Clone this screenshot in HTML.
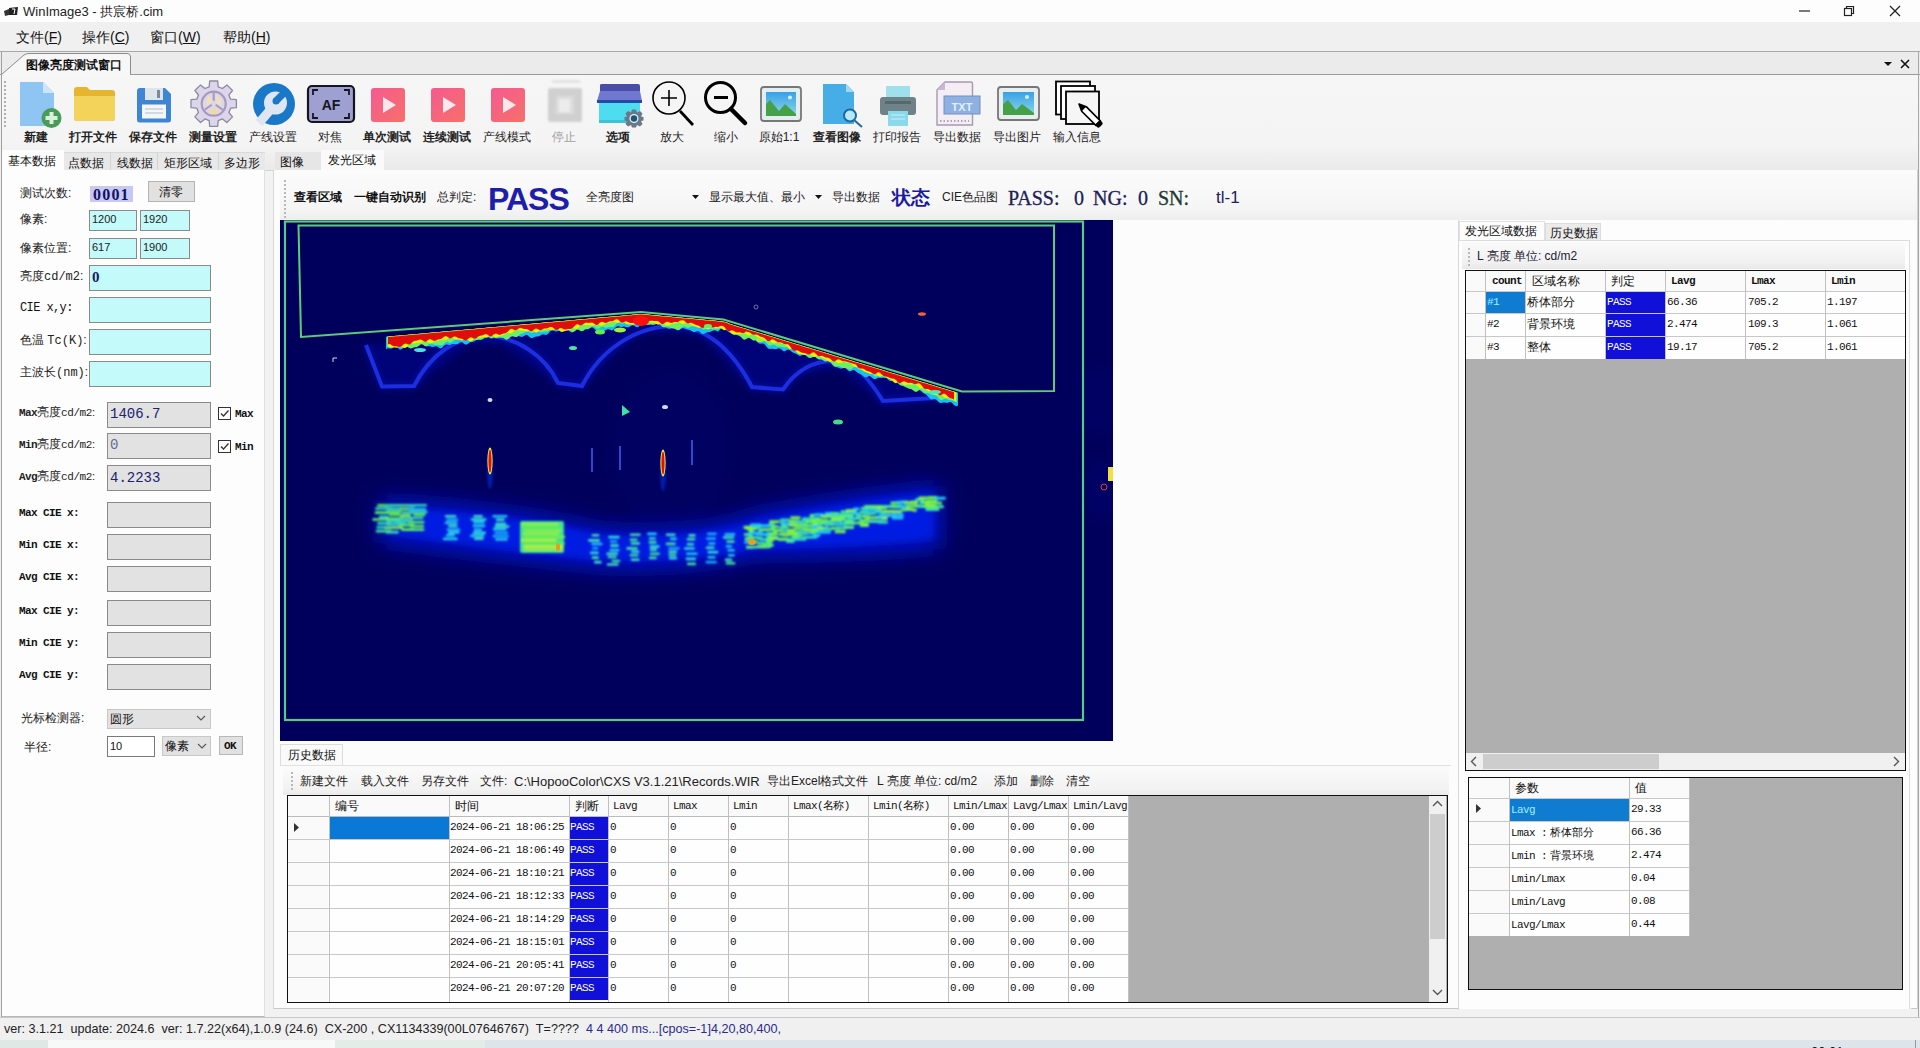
<!DOCTYPE html>
<html><head><meta charset="utf-8">
<style>
*{box-sizing:border-box;margin:0;padding:0}
html,body{width:1920px;height:1048px;overflow:hidden;background:#f0f0f0;font-family:"Liberation Sans",sans-serif;color:#000;position:relative}
.a{position:absolute}
.t{position:absolute;white-space:nowrap;line-height:1}
.mono{font-family:"Liberation Mono",monospace}
.lbl{position:absolute;white-space:nowrap;line-height:1;font-size:12px;transform:translateX(-50%);top:131px;color:#222}
.b{font-weight:bold}
.box{position:absolute;border:1px solid #8a8a8a}
.cy{background:#c4fafa}
.gr{background:#e2e2e2}
.ll{position:absolute;white-space:nowrap;line-height:1;font-size:12px;font-family:"Liberation Mono",monospace;color:#111;letter-spacing:-0.6px}
</style></head><body>
<!-- title bar -->
<div class="a" style="left:0;top:0;width:1920px;height:22px;background:#fdfdfd"></div>
<svg class="a" style="left:3px;top:6px" width="16" height="11" viewBox="0 0 16 11"><path d="M1 5 L6 3 L6 9 L2 10 Z" fill="#333"/><path d="M6 2 L15 1 L14 9 L6 9 Z" fill="#222"/><path d="M9 3 L12 3 L11 8" stroke="#fff" stroke-width="1" fill="none"/></svg>
<div class="t" style="left:23px;top:5px;font-size:13px;color:#222">WinImage3 - 拱宸桥.cim</div>
<svg class="a" style="left:1796px;top:4px" width="110" height="14" viewBox="0 0 110 14"><path d="M3 7 H14" stroke="#222" stroke-width="1.2"/><rect x="48.5" y="4.5" width="7" height="7" fill="none" stroke="#222" stroke-width="1.2"/><path d="M50.5 4.5 V2.5 H57.5 V9.5 H55.5" fill="none" stroke="#222" stroke-width="1.2"/><path d="M94 2 L104 12 M104 2 L94 12" stroke="#222" stroke-width="1.3"/></svg>
<!-- menu bar -->
<div class="a" style="left:0;top:22px;width:1920px;height:29px;background:#f0f0f0"></div>
<div class="t" style="left:16px;top:30px;font-size:14px;color:#111">文件(<u>F</u>)</div>
<div class="t" style="left:82px;top:30px;font-size:14px;color:#111">操作(<u>C</u>)</div>
<div class="t" style="left:150px;top:30px;font-size:14px;color:#111">窗口(<u>W</u>)</div>
<div class="t" style="left:223px;top:30px;font-size:14px;color:#111">帮助(<u>H</u>)</div>
<div class="a" style="left:0;top:51px;width:1920px;height:1px;background:#a8a8a8"></div>
<!-- doc tab strip -->
<div class="a" style="left:0;top:52px;width:1920px;height:22px;background:#ebebeb"></div>
<svg class="a" style="left:0;top:52px" width="140" height="24" viewBox="0 0 140 24"><path d="M1 23 L24 3 Q26 1.5 29 1.5 L127 1.5 Q130 1.5 130.5 4 L130.5 23" fill="#f7f7f7" stroke="#8c8c8c" stroke-width="1"/></svg>
<div class="t b" style="left:26px;top:59px;font-size:12px;color:#111">图像亮度测试窗口</div>
<div class="a" style="left:0;top:74px;width:1px;height:1px;background:#9a9a9a"></div>
<div class="a" style="left:130px;top:74px;width:1790px;height:1px;background:#9a9a9a"></div>
<svg class="a" style="left:1882px;top:58px" width="32" height="12" viewBox="0 0 32 12"><path d="M2 4 L10 4 L6 8 Z" fill="#111"/><path d="M19 2 L27 10 M27 2 L19 10" stroke="#111" stroke-width="1.6"/></svg>
<!-- toolbar -->
<div class="a" style="left:1px;top:75px;width:1917px;height:96px;background:linear-gradient(#f6f6f6,#f4f4f4 72%,#e9e9e9)"></div>
<div class="a" style="left:1px;top:52px;width:1px;height:966px;background:#a0a0a0"></div>
<div class="a" style="left:1918px;top:52px;width:1px;height:966px;background:#a8a8a8"></div>
<div class="a" style="left:4px;top:81px;width:2px;height:48px;background:repeating-linear-gradient(#b0b0b0 0 2px,transparent 2px 4px)"></div>
<!-- toolbar icons -->
<svg class="a" style="left:0;top:75px" width="1120" height="56" viewBox="0 75 1120 56">
 <!-- 新建 -->
 <path d="M20 82 H43 L54 93 V126 H20 Z" fill="#8ec5f2"/>
 <path d="M43 82 L54 93 H43 Z" fill="#c9e6fa"/>
 <circle cx="51.5" cy="118" r="10" fill="#4a9a5a"/>
 <path d="M51.5 112 V124 M45.5 118 H57.5" stroke="#d8f0dc" stroke-width="4"/>
 <!-- 打开文件 -->
 <path d="M74 90 Q74 87 77 87 H87 L90 90 H112 Q115 90 115 93 V118 Q115 121 112 121 H77 Q74 121 74 118 Z" fill="#e6b530"/>
 <path d="M74 96 H115 V118 Q115 121 112 121 H77 Q74 121 74 118 Z" fill="#f4d35a"/>
 <!-- 保存文件 -->
 <path d="M137 91 Q137 88 140 88 H165 L171 94 V120 Q171 122.5 168 122.5 H140 Q137 122.5 137 120 Z" fill="#3e86d4"/>
 <rect x="145" y="88" width="18" height="12" fill="#dce4ec"/>
 <rect x="157" y="90" width="3" height="8" fill="#7a8a98"/>
 <rect x="142" y="104.5" width="24" height="14" fill="#f4f6f8"/>
 <path d="M145 109 H163 M145 113 H163" stroke="#b0bcc8" stroke-width="1"/>
 <!-- 测量设置 gear -->
 <g transform="translate(213.7,103.7)">
  <path d="M-4.5 -16.9 L-4.0 -22.7 L4.0 -22.7 L4.5 -16.9 L8.8 -15.2 L13.2 -18.8 L18.8 -13.2 L15.2 -8.8 L16.9 -4.5 L22.7 -4.0 L22.7 4.0 L16.9 4.5 L15.2 8.8 L18.8 13.2 L13.2 18.8 L8.8 15.2 L4.5 16.9 L4.0 22.7 L-4.0 22.7 L-4.5 16.9 L-8.7 15.2 L-13.2 18.8 L-18.8 13.2 L-15.2 8.7 L-16.9 4.5 L-22.7 4.0 L-22.7 -4.0 L-16.9 -4.5 L-15.2 -8.7 L-18.8 -13.2 L-13.2 -18.8 L-8.8 -15.2 Z" fill="#dcd6ec" stroke="#8e8a9c" stroke-width="1.3" stroke-linejoin="round"/>
  <circle r="12" fill="none" stroke="#a898bc" stroke-width="2.2"/>
  <path d="M0 -3 L0 -11 M-2 1 L-9 6 M2 1 L9 6" stroke="#a898bc" stroke-width="2"/>
  <path d="M-3 -9 Q-9 -5 -7 2 L-2 -1 Z M3 -9 Q9 -5 7 2 L2 -1 Z" fill="#f0e0b8"/>
  <ellipse cx="0" cy="7.5" rx="4.5" ry="2.5" fill="#f0dc98"/>
 </g>
 <!-- 产线设置 -->
 <circle cx="274" cy="104" r="21" fill="#1a78c8"/>
 <path d="M259 123 L271 109" stroke="#dde6f2" stroke-width="9"/>
 <circle cx="275.5" cy="103" r="11.5" fill="#dde6f2"/>
 <path d="M276 101 L286 91" stroke="#1a78c8" stroke-width="7"/><circle cx="276" cy="101" r="3.5" fill="#1a78c8"/>
 <!-- AF -->
 <rect x="308" y="86" width="46" height="36" rx="4" fill="#9ea0d2" stroke="#15151f" stroke-width="2.2"/>
 <path d="M313 95 V90 H318 M349 95 V90 H344 M313 113 V118 H318 M349 113 V118 H344" stroke="#15151f" stroke-width="1.8" fill="none"/>
 <text x="331" y="110" font-family="Liberation Sans" font-weight="bold" font-size="14" text-anchor="middle" fill="#15151f">AF</text>
 <!-- play x3 -->
 <defs><linearGradient id="pk" x1="0" y1="0" x2="1" y2="1"><stop offset="0" stop-color="#f55a90"/><stop offset="1" stop-color="#f6706a"/></linearGradient></defs>
 <rect x="371" y="88" width="34" height="34" rx="3" fill="url(#pk)"/>
 <path d="M383 97 L396 105 L383 113 Z" fill="#fde8ec"/>
 <rect x="431" y="88" width="34" height="34" rx="3" fill="url(#pk)"/>
 <path d="M443 97 L456 105 L443 113 Z" fill="#fde8ec"/>
 <rect x="491" y="88" width="34" height="34" rx="3" fill="url(#pk)"/>
 <path d="M503 97 L516 105 L503 113 Z" fill="#fde8ec"/>
 <!-- stop (disabled) -->
 <defs><filter id="sb"><feGaussianBlur stdDeviation="0.9"/></filter></defs>
 <g filter="url(#sb)"><rect x="548" y="88" width="34" height="34" rx="2" fill="#d0d0d0"/><rect x="556" y="96" width="18" height="18" fill="#dcdcdc"/><rect x="559" y="99" width="11" height="13" fill="#ececec"/><rect x="552" y="80" width="28" height="3" fill="#e2e2e2"/></g>
 <!-- 选项 -->
 <path d="M600 85 Q600 84 602 84 H638 Q640 84 640 86 V91 H600 Z" fill="#4a4ea8"/>
 <path d="M600 91 H640 L642 101 H597 Z" fill="#7078d0"/>
 <rect x="597" y="100" width="45" height="3" fill="#2848a8"/>
 <rect x="599" y="103" width="41" height="20" fill="#4edcf0"/>
 <rect x="599" y="120" width="41" height="3" fill="#40c0d8"/>
 <g transform="translate(634,118.5)"><path d="M-2 -9 H2 L3 -6 L6 -7.5 L8.5 -5 L7 -2 L9.5 -1.5 V2 L7 2.5 L8.5 5.5 L6 8 L3 6.5 L2 9 H-2 L-3 6.5 L-6 8 L-8.5 5.5 L-7 2.5 L-9.5 2 V-1.5 L-7 -2 L-8.5 -5 L-6 -7.5 L-3 -6 Z" fill="#6a7888"/><circle r="4.5" fill="#e8f4f8"/><circle r="3.2" fill="#1a5878"/></g>
 <!-- 放大 -->
 <circle cx="669" cy="98" r="16" fill="none" stroke="#000" stroke-width="1.6"/>
 <path d="M661 98 H677 M669 90 V106" stroke="#000" stroke-width="1.6"/>
 <path d="M680 111 L693 125" stroke="#000" stroke-width="2.8"/>
 <!-- 缩小 -->
 <circle cx="720.5" cy="97.5" r="15" fill="none" stroke="#000" stroke-width="3"/>
 <path d="M714 97.5 H728" stroke="#000" stroke-width="3"/>
 <path d="M731 109 L745 123" stroke="#000" stroke-width="4.5" stroke-linecap="round"/>
 <!-- 原始1:1 -->
 <rect x="761" y="87" width="40" height="34" rx="3" fill="#e4eef0" stroke="#777" stroke-width="1.8"/>
 <defs><linearGradient id="sky" x1="0" y1="0" x2="0" y2="1"><stop offset="0" stop-color="#3aa0e6"/><stop offset="1" stop-color="#8ad8ea"/></linearGradient></defs>
 <rect x="766" y="92" width="30" height="24" fill="url(#sky)"/>
 <path d="M766 116 V104 L770 100 L779 111 L785 104 L796 114 V116 Z" fill="#46a048"/>
 <circle cx="790" cy="97.5" r="2" fill="#d0f0f8"/>
 <!-- 查看图像 -->
 <path d="M823 84 H846 L854 92 V124 H823 Z" fill="#46ade6"/>
 <path d="M846 84 L854 92 H846 Z" fill="#a0d8f4"/>
 <circle cx="850" cy="115.5" r="6" fill="#b8e8f8" stroke="#1a6aa0" stroke-width="2"/>
 <path d="M854 120 L862 127" stroke="#2a6e9a" stroke-width="2.2"/>
 <!-- 打印报告 -->
 <rect x="886" y="86" width="24" height="14" fill="#9ee0ec"/>
 <rect x="880" y="97" width="36" height="18" rx="3" fill="#6f8288"/>
 <rect x="885" y="101" width="26" height="3" fill="#55686e"/>
 <rect x="888" y="111" width="20" height="15" fill="#8ad8ea"/>
 <path d="M891 115 H905 M891 119 H905" stroke="#c8f0f8" stroke-width="1"/>
 <!-- 导出数据 TXT -->
 <path d="M937 90 L945 82 H971 Q972.5 82 972.5 84 V125 H937 Z" fill="#f4eef4" stroke="#a898b0" stroke-width="1.4"/>
 <path d="M937 90 H945 V82 Z" fill="#c8b8d4"/>
 <rect x="944" y="96" width="36" height="18" fill="#8fb0e0" stroke="#7090c0" stroke-width="1"/>
 <text x="962" y="110.5" font-family="Liberation Sans" font-weight="bold" font-size="11" text-anchor="middle" fill="#e0f0ff">TXT</text>
 <path d="M940 121 H969" stroke="#988aa4" stroke-width="1.3" stroke-dasharray="1.5 2"/>
 <!-- 导出图片 -->
 <rect x="998" y="87" width="41" height="33" rx="3" fill="#e8eef0" stroke="#777" stroke-width="1.8"/>
 <rect x="1003" y="92" width="31" height="23" fill="url(#sky)"/>
 <path d="M1003 115 V104 L1008 100 L1016 110 L1022 104 L1034 113 V115 Z" fill="#46a048"/>
 <circle cx="1027" cy="97" r="2" fill="#d0f0f8"/>
 <!-- 输入信息 -->
 <rect x="1056" y="81.5" width="34" height="33" fill="#fff" stroke="#000" stroke-width="1.8"/>
 <rect x="1061" y="86" width="34" height="33" fill="#fff" stroke="#000" stroke-width="1.8"/>
 <rect x="1066" y="91.5" width="33" height="32.5" fill="#f6f6f6" stroke="#000" stroke-width="1.8"/>
 <g transform="translate(1079,104) rotate(45)"><path d="M0 0 L7 -3.2 L27 -3.2 L27 3.2 L7 3.2 Z" fill="#fff" stroke="#000" stroke-width="1.6" stroke-linejoin="round"/><rect x="26" y="-3.6" width="5" height="7.2" rx="2" fill="#000"/><path d="M0 0 L7 -3.2 L7 3.2 Z" fill="#000"/></g>
</svg>
<!-- toolbar labels -->
<div class="lbl b" style="left:36px">新建</div>
<div class="lbl b" style="left:93px">打开文件</div>
<div class="lbl b" style="left:153px">保存文件</div>
<div class="lbl b" style="left:213px">测量设置</div>
<div class="lbl" style="left:273px">产线设置</div>
<div class="lbl" style="left:330px">对焦</div>
<div class="lbl b" style="left:387px">单次测试</div>
<div class="lbl b" style="left:447px">连续测试</div>
<div class="lbl" style="left:507px">产线模式</div>
<div class="lbl" style="left:564px;color:#a0a0a0">停止</div>
<div class="lbl b" style="left:618px">选项</div>
<div class="lbl" style="left:672px">放大</div>
<div class="lbl" style="left:726px">缩小</div>
<div class="lbl" style="left:779px">原始1:1</div>
<div class="lbl b" style="left:837px">查看图像</div>
<div class="lbl" style="left:897px">打印报告</div>
<div class="lbl" style="left:957px">导出数据</div>
<div class="lbl" style="left:1017px">导出图片</div>
<div class="lbl" style="left:1077px">输入信息</div>
<!-- ===== LEFT PANEL ===== -->
<div class="a" style="left:2px;top:171px;width:1916px;height:846px;background:#f2f2f2"></div>
<div class="a" style="left:2px;top:170px;width:1916px;height:1px;background:#d4d4d4"></div>
<div class="a" style="left:2px;top:170px;width:263px;height:847px;background:#fdfdfd;border-bottom:1px solid #b8b8b8;border-right:1px solid #e0e0e0"></div>
<div class="a" style="left:63px;top:152px;width:202px;height:18px;background:#e8e8e8;border-top:1px solid #dadada"></div>
<div class="a" style="left:2px;top:150px;width:62px;height:21px;background:#fdfdfd"></div>
<div class="t" style="left:8px;top:155px;font-size:12px;color:#111">基本数据</div>
<div class="t" style="left:68px;top:157px;font-size:12px;color:#111">点数据</div>
<div class="a" style="left:110px;top:152px;width:1px;height:18px;background:#d4d4d4"></div>
<div class="t" style="left:117px;top:157px;font-size:12px;color:#111">线数据</div>
<div class="a" style="left:157px;top:152px;width:1px;height:18px;background:#d4d4d4"></div>
<div class="t" style="left:164px;top:157px;font-size:12px;color:#111">矩形区域</div>
<div class="a" style="left:218px;top:152px;width:1px;height:18px;background:#d4d4d4"></div>
<div class="t" style="left:224px;top:157px;font-size:12px;color:#111">多边形</div>

<div class="t" style="left:20px;top:187px;font-size:12px;color:#222">测试次数:</div>
<div class="a" style="left:90px;top:186px;width:43px;height:16px;background:#c8c8f0"></div>
<div class="t b" style="left:93px;top:187px;font-size:16px;color:#10106a;font-family:'Liberation Serif';letter-spacing:1.2px">0001</div>
<div class="a" style="left:148px;top:181px;width:47px;height:21px;background:#e1e1e1;border:1px solid #b4b4b4"></div>
<div class="t" style="left:159px;top:186px;font-size:12px;color:#111">清零</div>

<div class="t" style="left:20px;top:213px;font-size:12px;color:#222">像素:</div>
<div class="box cy" style="left:89px;top:210px;width:48px;height:21px"></div>
<div class="box cy" style="left:140px;top:210px;width:50px;height:21px"></div>
<div class="t" style="left:92px;top:214px;font-size:11px;color:#222">1200</div>
<div class="t" style="left:143px;top:214px;font-size:11px;color:#222">1920</div>

<div class="t" style="left:20px;top:242px;font-size:12px;color:#222">像素位置:</div>
<div class="box cy" style="left:89px;top:238px;width:48px;height:21px"></div>
<div class="box cy" style="left:140px;top:238px;width:50px;height:21px"></div>
<div class="t" style="left:92px;top:242px;font-size:11px;color:#222">617</div>
<div class="t" style="left:143px;top:242px;font-size:11px;color:#222">1900</div>

<div class="t" style="left:20px;top:270px;font-size:12px;color:#222">亮度<span class="mono">cd/m2</span>:</div>
<div class="box cy" style="left:89px;top:265px;width:122px;height:26px"></div>
<div class="t b" style="left:92px;top:270px;font-size:15px;color:#1a1a60;font-family:'Liberation Serif'">0</div>

<div class="ll" style="left:20px;top:302px">CIE x,y:</div>
<div class="box cy" style="left:89px;top:297px;width:122px;height:26px"></div>
<div class="t" style="left:20px;top:334px;font-size:12px;color:#222">色温 <span class="mono">Tc(K)</span>:</div>
<div class="box cy" style="left:89px;top:329px;width:122px;height:26px"></div>
<div class="t" style="left:20px;top:366px;font-size:12px;color:#222">主波长<span class="mono">(nm)</span>:</div>
<div class="box cy" style="left:89px;top:361px;width:122px;height:26px"></div>

<div class="t" style="left:19px;top:406px;font-size:11px;color:#222"><span class="mono b" style="letter-spacing:-0.6px">Max</span><span style="font-size:12px">亮度</span><span class="mono" style="letter-spacing:-0.4px">cd/m2</span>:</div>
<div class="box gr" style="left:107px;top:402px;width:104px;height:26px"></div>
<div class="t mono" style="left:110px;top:407px;font-size:14px;color:#202070">1406.7</div>
<div class="a" style="left:218px;top:407px;width:13px;height:13px;border:1px solid #333;background:#fff"></div>
<svg class="a" style="left:219px;top:408px" width="11" height="11"><path d="M2 5.5 L4.5 8 L9.5 2.5" stroke="#333" stroke-width="1.3" fill="none"/></svg>
<div class="ll b" style="left:235px;top:409px;font-size:11px">Max</div>

<div class="t" style="left:19px;top:438px;font-size:11px;color:#222"><span class="mono b" style="letter-spacing:-0.6px">Min</span><span style="font-size:12px">亮度</span><span class="mono" style="letter-spacing:-0.4px">cd/m2</span>:</div>
<div class="box gr" style="left:107px;top:433px;width:104px;height:26px"></div>
<div class="t mono" style="left:110px;top:438px;font-size:14px;color:#6a6a90">0</div>
<div class="a" style="left:218px;top:440px;width:13px;height:13px;border:1px solid #333;background:#fff"></div>
<svg class="a" style="left:219px;top:441px" width="11" height="11"><path d="M2 5.5 L4.5 8 L9.5 2.5" stroke="#333" stroke-width="1.3" fill="none"/></svg>
<div class="ll b" style="left:235px;top:442px;font-size:11px">Min</div>

<div class="t" style="left:19px;top:470px;font-size:11px;color:#222"><span class="mono b" style="letter-spacing:-0.6px">Avg</span><span style="font-size:12px">亮度</span><span class="mono" style="letter-spacing:-0.4px">cd/m2</span>:</div>
<div class="box gr" style="left:107px;top:465px;width:104px;height:26px"></div>
<div class="t mono" style="left:110px;top:471px;font-size:14px;color:#202070">4.2233</div>

<div class="ll b" style="left:19px;top:508px;font-size:11px">Max CIE x:</div>
<div class="box gr" style="left:107px;top:502px;width:104px;height:26px"></div>
<div class="ll b" style="left:19px;top:540px;font-size:11px">Min CIE x:</div>
<div class="box gr" style="left:107px;top:534px;width:104px;height:26px"></div>
<div class="ll b" style="left:19px;top:572px;font-size:11px">Avg CIE x:</div>
<div class="box gr" style="left:107px;top:566px;width:104px;height:26px"></div>
<div class="ll b" style="left:19px;top:606px;font-size:11px">Max CIE y:</div>
<div class="box gr" style="left:107px;top:600px;width:104px;height:26px"></div>
<div class="ll b" style="left:19px;top:638px;font-size:11px">Min CIE y:</div>
<div class="box gr" style="left:107px;top:632px;width:104px;height:26px"></div>
<div class="ll b" style="left:19px;top:670px;font-size:11px">Avg CIE y:</div>
<div class="box gr" style="left:107px;top:664px;width:104px;height:26px"></div>

<div class="t" style="left:21px;top:712px;font-size:12px;color:#222">光标检测器:</div>
<div class="box" style="left:107px;top:709px;width:104px;height:20px;background:#e2e2e2;border-color:#c8c8c8"></div>
<div class="t" style="left:110px;top:713px;font-size:12px;color:#111">圆形</div>
<svg class="a" style="left:196px;top:715px" width="10" height="7"><path d="M1 1 L5 5 L9 1" stroke="#555" stroke-width="1.1" fill="none"/></svg>
<div class="t" style="left:24px;top:741px;font-size:12px;color:#222">半径:</div>
<div class="box" style="left:107px;top:736px;width:48px;height:21px;background:#fff;border-color:#7a7a7a"></div>
<div class="t" style="left:110px;top:741px;font-size:11px;color:#111">10</div>
<div class="box" style="left:162px;top:736px;width:49px;height:20px;background:#e2e2e2;border-color:#c8c8c8"></div>
<div class="t" style="left:165px;top:740px;font-size:12px;color:#111">像素</div>
<svg class="a" style="left:197px;top:743px" width="10" height="7"><path d="M1 1 L5 5 L9 1" stroke="#555" stroke-width="1.1" fill="none"/></svg>
<div class="box" style="left:219px;top:736px;width:24px;height:19px;background:#e1e1e1;border-color:#b8b8b8"></div>
<div class="ll b" style="left:224px;top:741px;font-size:11px">OK</div>
<!-- ===== CENTER PANEL ===== -->
<div class="a" style="left:275px;top:152px;width:46px;height:18px;background:#e6e6e6"></div>
<div class="a" style="left:321px;top:150px;width:63px;height:21px;background:#fafafa"></div>
<div class="t" style="left:280px;top:156px;font-size:12px;color:#111">图像</div>
<div class="t" style="left:328px;top:154px;font-size:12px;color:#111">发光区域</div>
<div class="a" style="left:273px;top:170px;width:1645px;height:839px;background:#fcfcfc;border-left:1px solid #d8d8d8;border-right:1px solid #d0d0d0;border-bottom:1px solid #c8c8c8"></div>
<!-- center toolbar -->
<div class="a" style="left:280px;top:171px;width:1637px;height:49px;background:linear-gradient(#fbfbfb,#f6f6f6 70%,#eeeeee)"></div>
<div class="a" style="left:284px;top:180px;width:2px;height:38px;background:repeating-linear-gradient(#b8b8b8 0 2px,transparent 2px 4px)"></div>
<div class="t b" style="left:294px;top:191px;font-size:12px;color:#111">查看区域</div>
<div class="t b" style="left:354px;top:191px;font-size:12px;color:#111">一键自动识别</div>
<div class="t" style="left:437px;top:191px;font-size:12px;color:#222">总判定:</div>
<div class="t b" style="left:488px;top:183px;font-size:32px;color:#1e1eaa;letter-spacing:-1px">PASS</div>
<div class="t" style="left:586px;top:191px;font-size:12px;color:#222">全亮度图</div>
<svg class="a" style="left:692px;top:195px" width="8" height="5"><path d="M0 0 H7 L3.5 4 Z" fill="#111"/></svg>
<div class="t" style="left:709px;top:191px;font-size:12px;color:#222">显示最大值、最小</div>
<svg class="a" style="left:815px;top:195px" width="8" height="5"><path d="M0 0 H7 L3.5 4 Z" fill="#111"/></svg>
<div class="t" style="left:832px;top:191px;font-size:12px;color:#222">导出数据</div>
<div class="t b" style="left:892px;top:188px;font-size:19px;color:#1a1aa0">状态</div>
<div class="t" style="left:942px;top:191px;font-size:12px;color:#222">CIE色品图</div>
<div class="t b" style="left:1008px;top:188px;font-size:20px;color:#20205a;font-family:'Liberation Serif';font-weight:normal;-webkit-text-stroke:0.3px #20205a">PASS:</div>
<div class="t b" style="left:1074px;top:188px;font-size:20px;color:#20205a;font-family:'Liberation Serif';font-weight:normal;-webkit-text-stroke:0.3px #20205a">0</div>
<div class="t b" style="left:1093px;top:188px;font-size:20px;color:#20205a;font-family:'Liberation Serif';font-weight:normal;-webkit-text-stroke:0.3px #20205a">NG:</div>
<div class="t b" style="left:1138px;top:188px;font-size:20px;color:#20205a;font-family:'Liberation Serif';font-weight:normal;-webkit-text-stroke:0.3px #20205a">0</div>
<div class="t b" style="left:1158px;top:188px;font-size:20px;color:#203a30;font-family:'Liberation Serif';font-weight:normal;-webkit-text-stroke:0.3px #203a30">SN:</div>
<div class="t" style="left:1216px;top:189px;font-size:17px;color:#20205a">tl-1</div>
<svg class="a" style="left:280px;top:220px" width="833" height="521" viewBox="280 220 833 521">
<defs>
<filter id="bl1" x="-30%" y="-80%" width="160%" height="260%"><feGaussianBlur stdDeviation="7"/></filter>
<filter id="bl2" x="-30%" y="-80%" width="160%" height="260%"><feGaussianBlur stdDeviation="3"/></filter>
<filter id="bl3" x="-10%" y="-50%" width="120%" height="200%"><feGaussianBlur stdDeviation="1.2"/></filter>
<filter id="bl4" x="-10%" y="-50%" width="120%" height="200%"><feGaussianBlur stdDeviation="0.6"/></filter>
<filter id="bl5" x="-10%" y="-50%" width="120%" height="200%"><feGaussianBlur stdDeviation="0.8"/></filter>
</defs>
<rect x="280" y="220" width="833" height="521" fill="#00005c"/>
<g filter="url(#bl1)" opacity="0.15"><ellipse cx="670" cy="450" rx="60" ry="80" fill="#000a80"/><rect x="1080" y="370" width="30" height="60" fill="#000a90"/><ellipse cx="1100" cy="490" rx="15" ry="30" fill="#0010a0"/><rect x="860" y="500" width="30" height="60" fill="#000880"/></g>
<path d="M366 345 L640 318 L724 325 L955 395 L951 400 L883 405 L840 370 L800 375 L783 392 L752 390 L700 335 L640 330 L582 388 L558 385 L500 345 L470 345 L414 388 L382 388 Z" fill="#0010b8" opacity="0.3" filter="url(#bl2)"/>
<path d="M366 345 L382 386.5 L414 386 C430 355 455 337 485 336 C515 336 545 355 558 383 L582 386 C600 350 635 327 672 326 C710 326 735 355 752 387 L783 389.5 C795 372 812 361 833 361 C855 361 870 380 883 401 L951 397" fill="none" stroke="#0818c0" stroke-width="8" opacity="0.35" filter="url(#bl2)"/>
<path d="M366 345 L382 386.5 L414 386 C430 355 455 337 485 336 C515 336 545 355 558 383 L582 386 C600 350 635 327 672 326 C710 326 735 355 752 387 L783 389.5 C795 372 812 361 833 361 C855 361 870 380 883 401 L951 397" fill="none" stroke="#1a2ee0" stroke-width="4" filter="url(#bl4)"/>
<path d="M386.0 336.7 L388.0 336.6 L390.0 336.4 L392.0 336.2 L394.0 336.0 L396.0 335.8 L398.0 335.7 L400.0 335.5 L402.0 335.3 L404.0 335.1 L406.0 334.9 L408.0 334.8 L410.0 334.6 L412.0 334.4 L414.0 334.2 L416.0 334.1 L418.0 333.9 L420.0 333.7 L422.0 333.5 L424.0 333.3 L426.0 333.2 L428.0 333.0 L430.0 332.8 L432.0 332.6 L434.0 332.5 L436.0 332.3 L438.0 332.1 L440.0 331.9 L442.0 331.7 L444.0 331.6 L446.0 331.4 L448.0 331.2 L450.0 331.0 L452.0 330.8 L454.0 330.7 L456.0 330.5 L458.0 330.3 L460.0 330.1 L462.0 330.0 L464.0 329.8 L466.0 329.6 L468.0 329.4 L470.0 329.2 L472.0 329.1 L474.0 328.9 L476.0 328.7 L478.0 328.5 L480.0 328.3 L482.0 328.2 L484.0 328.0 L486.0 327.8 L488.0 327.6 L490.0 327.5 L492.0 327.3 L494.0 327.1 L496.0 326.9 L498.0 326.7 L500.0 326.6 L502.0 326.4 L504.0 326.2 L506.0 326.0 L508.0 325.8 L510.0 325.7 L512.0 325.5 L514.0 325.3 L516.0 325.1 L518.0 325.0 L520.0 324.8 L522.0 324.6 L524.0 324.4 L526.0 324.2 L528.0 324.1 L530.0 323.9 L532.0 323.7 L534.0 323.5 L536.0 323.4 L538.0 323.2 L540.0 323.0 L542.0 322.8 L544.0 322.6 L546.0 322.5 L548.0 322.3 L550.0 322.1 L552.0 321.9 L554.0 321.7 L556.0 321.6 L558.0 321.4 L560.0 321.2 L562.0 321.0 L564.0 320.9 L566.0 320.7 L568.0 320.5 L570.0 320.3 L572.0 320.1 L574.0 320.0 L576.0 319.8 L578.0 319.6 L580.0 319.4 L582.0 319.2 L584.0 319.1 L586.0 318.9 L588.0 318.7 L590.0 318.5 L592.0 318.4 L594.0 318.2 L596.0 318.0 L598.0 317.8 L600.0 317.6 L602.0 317.5 L604.0 317.3 L606.0 317.1 L608.0 316.9 L610.0 316.8 L612.0 316.6 L614.0 316.4 L616.0 316.2 L618.0 316.0 L620.0 315.9 L622.0 315.7 L624.0 315.5 L626.0 315.3 L628.0 315.1 L630.0 315.0 L632.0 314.8 L634.0 314.6 L636.0 314.4 L638.0 314.3 L640.0 314.1 L642.0 314.1 L644.0 314.3 L646.0 314.5 L648.0 314.6 L650.0 314.8 L652.0 315.0 L654.0 315.2 L656.0 315.4 L658.0 315.5 L660.0 315.7 L662.0 315.9 L664.0 316.1 L666.0 316.3 L668.0 316.5 L670.0 316.6 L672.0 316.8 L674.0 317.0 L676.0 317.2 L678.0 317.4 L680.0 317.5 L682.0 317.7 L684.0 317.9 L686.0 318.1 L688.0 318.3 L690.0 318.5 L692.0 318.6 L694.0 318.8 L696.0 319.0 L698.0 319.2 L700.0 319.4 L702.0 319.5 L704.0 319.7 L706.0 319.9 L708.0 320.1 L710.0 320.3 L712.0 320.5 L714.0 320.6 L716.0 320.8 L718.0 321.0 L720.0 321.2 L722.0 321.4 L724.0 321.7 L726.0 322.3 L728.0 322.9 L730.0 324.0 L732.0 324.6 L734.0 325.2 L736.0 325.8 L738.0 326.4 L740.0 327.0 L742.0 327.6 L744.0 328.2 L746.0 328.8 L748.0 329.4 L750.0 330.0 L752.0 330.6 L754.0 331.2 L756.0 331.8 L758.0 332.4 L760.0 333.0 L762.0 333.6 L764.0 334.2 L766.0 334.8 L768.0 335.4 L770.0 336.0 L772.0 336.6 L774.0 337.2 L776.0 337.8 L778.0 338.5 L780.0 339.1 L782.0 339.7 L784.0 340.3 L786.0 340.9 L788.0 341.5 L790.0 342.1 L792.0 342.7 L794.0 343.3 L796.0 343.9 L798.0 344.5 L800.0 345.1 L802.0 345.7 L804.0 346.3 L806.0 346.9 L808.0 347.5 L810.0 348.1 L812.0 348.7 L814.0 349.3 L816.0 349.9 L818.0 350.5 L820.0 351.1 L822.0 351.7 L824.0 352.3 L826.0 352.9 L828.0 353.5 L830.0 354.2 L832.0 354.8 L834.0 355.4 L836.0 356.0 L838.0 356.6 L840.0 357.2 L842.0 357.8 L844.0 358.4 L846.0 359.0 L848.0 359.6 L850.0 360.2 L852.0 360.8 L854.0 361.4 L856.0 362.0 L858.0 362.6 L860.0 363.2 L862.0 363.8 L864.0 364.4 L866.0 365.0 L868.0 365.6 L870.0 366.2 L872.0 366.8 L874.0 367.4 L876.0 368.0 L878.0 368.6 L880.0 369.2 L882.0 369.8 L884.0 370.5 L886.0 371.1 L888.0 371.7 L890.0 372.3 L892.0 372.9 L894.0 373.5 L896.0 374.1 L898.0 374.7 L900.0 375.3 L902.0 375.9 L904.0 376.5 L906.0 377.1 L908.0 377.7 L910.0 378.3 L912.0 378.9 L914.0 379.5 L916.0 380.1 L918.0 380.7 L920.0 381.3 L922.0 381.9 L924.0 382.5 L926.0 383.1 L928.0 383.7 L930.0 384.3 L932.0 384.9 L934.0 385.5 L936.0 386.2 L938.0 386.8 L940.0 387.4 L942.0 388.0 L944.0 388.6 L946.0 389.2 L948.0 389.8 L950.0 390.4 L952.0 391.0 L954.0 391.6 L956.0 392.2 L958.0 392.8 L958.0 405.6 L956.0 406.2 L954.0 404.9 L952.0 402.7 L950.0 402.1 L948.0 402.7 L946.0 402.7 L944.0 402.4 L942.0 402.8 L940.0 403.1 L938.0 401.5 L936.0 399.3 L934.0 398.8 L932.0 399.5 L930.0 398.8 L928.0 396.4 L926.0 394.4 L924.0 393.4 L922.0 391.9 L920.0 390.3 L918.0 390.1 L916.0 390.8 L914.0 390.1 L912.0 387.8 L910.0 386.5 L908.0 387.1 L906.0 387.5 L904.0 386.5 L902.0 385.5 L900.0 385.0 L898.0 383.6 L896.0 381.3 L894.0 380.1 L892.0 380.9 L890.0 381.1 L888.0 379.4 L886.0 377.6 L884.0 377.4 L882.0 377.9 L880.0 377.7 L878.0 377.8 L876.0 379.0 L874.0 379.3 L872.0 377.7 L870.0 376.1 L868.0 376.5 L866.0 377.5 L864.0 376.7 L862.0 374.9 L860.0 373.8 L858.0 372.9 L856.0 371.3 L854.0 370.1 L852.0 370.6 L850.0 371.5 L848.0 370.5 L846.0 368.3 L844.0 367.7 L842.0 368.4 L840.0 368.4 L838.0 367.5 L836.0 367.1 L834.0 366.6 L832.0 364.6 L830.0 362.0 L828.0 361.1 L826.0 361.7 L824.0 361.2 L822.0 359.0 L820.0 357.3 L818.0 357.1 L816.0 356.8 L814.0 356.1 L812.0 356.6 L810.0 357.8 L808.0 357.6 L806.0 355.7 L804.0 354.6 L802.0 355.3 L800.0 355.9 L798.0 355.0 L796.0 353.7 L794.0 353.1 L792.0 352.0 L790.0 350.2 L788.0 349.5 L786.0 350.6 L784.0 351.4 L782.0 350.1 L780.0 348.5 L778.0 348.6 L776.0 349.3 L774.0 349.1 L772.0 348.7 L770.0 348.9 L768.0 348.4 L766.0 346.1 L764.0 343.7 L762.0 343.4 L760.0 343.8 L758.0 342.7 L756.0 340.4 L754.0 339.1 L752.0 338.5 L750.0 337.5 L748.0 336.6 L746.0 337.3 L744.0 338.3 L742.0 337.3 L740.0 335.1 L738.0 334.3 L736.0 335.0 L734.0 334.9 L732.0 333.7 L730.0 332.7 L728.0 331.6 L726.0 330.0 L724.0 327.9 L722.0 327.9 L720.0 329.6 L718.0 331.8 L716.0 330.8 L714.0 330.2 L712.0 331.1 L710.0 332.0 L708.0 332.2 L706.0 332.8 L704.0 334.1 L702.0 333.9 L700.0 332.0 L698.0 330.7 L696.0 331.4 L694.0 332.2 L692.0 331.2 L690.0 329.9 L688.0 329.5 L686.0 329.1 L684.0 328.1 L682.0 327.9 L680.0 329.5 L678.0 330.6 L676.0 329.5 L674.0 327.9 L672.0 327.9 L670.0 328.7 L668.0 328.4 L666.0 327.5 L664.0 327.3 L662.0 326.7 L660.0 324.7 L658.0 322.9 L656.0 323.2 L654.0 324.6 L652.0 324.5 L650.0 323.2 L648.0 322.9 L646.0 323.7 L644.0 324.0 L642.0 324.1 L640.0 325.4 L638.0 327.2 L636.0 327.0 L634.0 325.4 L632.0 325.2 L630.0 326.6 L628.0 327.4 L626.0 326.9 L624.0 326.5 L622.0 326.9 L620.0 326.7 L618.0 326.0 L616.0 326.9 L614.0 329.3 L612.0 330.5 L610.0 329.7 L608.0 329.1 L606.0 329.9 L604.0 330.9 L602.0 330.7 L600.0 330.7 L598.0 331.2 L596.0 330.6 L594.0 328.5 L592.0 327.2 L590.0 328.1 L588.0 329.4 L586.0 328.9 L584.0 328.0 L582.0 328.2 L580.0 328.8 L578.0 328.8 L576.0 329.2 L574.0 331.0 L572.0 332.4 L570.0 331.5 L568.0 329.9 L566.0 330.1 L564.0 331.3 L562.0 331.5 L560.0 331.0 L558.0 331.1 L556.0 331.4 L554.0 330.7 L552.0 330.1 L550.0 331.6 L548.0 334.1 L546.0 335.0 L544.0 334.4 L542.0 334.5 L540.0 335.8 L538.0 336.5 L536.0 336.6 L534.0 337.3 L532.0 338.2 L530.0 337.4 L528.0 335.4 L526.0 334.8 L524.0 336.1 L522.0 337.0 L520.0 336.4 L518.0 335.9 L516.0 336.4 L514.0 336.6 L512.0 336.2 L510.0 336.9 L508.0 339.0 L506.0 339.9 L504.0 338.5 L502.0 337.2 L500.0 337.6 L498.0 338.3 L496.0 337.9 L494.0 337.5 L492.0 337.8 L490.0 337.6 L488.0 336.2 L486.0 335.7 L484.0 337.5 L482.0 339.7 L480.0 340.0 L478.0 339.6 L476.0 340.2 L474.0 341.5 L472.0 341.9 L470.0 342.3 L468.0 343.8 L466.0 344.8 L464.0 343.8 L462.0 342.1 L460.0 342.2 L458.0 343.7 L456.0 344.3 L454.0 343.9 L452.0 344.1 L450.0 344.9 L448.0 344.7 L446.0 344.4 L444.0 345.8 L442.0 348.0 L440.0 348.5 L438.0 347.1 L436.0 346.3 L434.0 346.8 L432.0 347.0 L430.0 346.3 L428.0 346.2 L426.0 346.5 L424.0 345.5 L422.0 343.6 L420.0 343.2 L418.0 344.9 L416.0 346.3 L414.0 346.0 L412.0 345.6 L410.0 346.3 L408.0 346.9 L406.0 346.8 L404.0 347.4 L402.0 349.1 L400.0 349.7 L398.0 348.1 L396.0 346.7 L394.0 347.2 L392.0 348.4 L390.0 348.5 L388.0 348.3 L386.0 349.1 Z" fill="#18c0f0" filter="url(#bl4)"/>
<path d="M387.0 336.6 L389.0 336.5 L391.0 336.3 L393.0 336.1 L395.0 335.9 L397.0 335.8 L399.0 335.6 L401.0 335.4 L403.0 335.2 L405.0 335.0 L407.0 334.9 L409.0 334.7 L411.0 334.5 L413.0 334.3 L415.0 334.1 L417.0 334.0 L419.0 333.8 L421.0 333.6 L423.0 333.4 L425.0 333.3 L427.0 333.1 L429.0 332.9 L431.0 332.7 L433.0 332.5 L435.0 332.4 L437.0 332.2 L439.0 332.0 L441.0 331.8 L443.0 331.6 L445.0 331.5 L447.0 331.3 L449.0 331.1 L451.0 330.9 L453.0 330.8 L455.0 330.6 L457.0 330.4 L459.0 330.2 L461.0 330.0 L463.0 329.9 L465.0 329.7 L467.0 329.5 L469.0 329.3 L471.0 329.2 L473.0 329.0 L475.0 328.8 L477.0 328.6 L479.0 328.4 L481.0 328.3 L483.0 328.1 L485.0 327.9 L487.0 327.7 L489.0 327.5 L491.0 327.4 L493.0 327.2 L495.0 327.0 L497.0 326.8 L499.0 326.7 L501.0 326.5 L503.0 326.3 L505.0 326.1 L507.0 325.9 L509.0 325.8 L511.0 325.6 L513.0 325.4 L515.0 325.2 L517.0 325.0 L519.0 324.9 L521.0 324.7 L523.0 324.5 L525.0 324.3 L527.0 324.2 L529.0 324.0 L531.0 323.8 L533.0 323.6 L535.0 323.4 L537.0 323.3 L539.0 323.1 L541.0 322.9 L543.0 322.7 L545.0 322.5 L547.0 322.4 L549.0 322.2 L551.0 322.0 L553.0 321.8 L555.0 321.7 L557.0 321.5 L559.0 321.3 L561.0 321.1 L563.0 320.9 L565.0 320.8 L567.0 320.6 L569.0 320.4 L571.0 320.2 L573.0 320.1 L575.0 319.9 L577.0 319.7 L579.0 319.5 L581.0 319.3 L583.0 319.2 L585.0 319.0 L587.0 318.8 L589.0 318.6 L591.0 318.4 L593.0 318.3 L595.0 318.1 L597.0 317.9 L599.0 317.7 L601.0 317.6 L603.0 317.4 L605.0 317.2 L607.0 317.0 L609.0 316.8 L611.0 316.7 L613.0 316.5 L615.0 316.3 L617.0 316.1 L619.0 315.9 L621.0 315.8 L623.0 315.6 L625.0 315.4 L627.0 315.2 L629.0 315.1 L631.0 314.9 L633.0 314.7 L635.0 314.5 L637.0 314.3 L639.0 314.2 L641.0 314.0 L643.0 314.2 L645.0 314.4 L647.0 314.5 L649.0 314.7 L651.0 314.9 L653.0 315.1 L655.0 315.3 L657.0 315.5 L659.0 315.6 L661.0 315.8 L663.0 316.0 L665.0 316.2 L667.0 316.4 L669.0 316.5 L671.0 316.7 L673.0 316.9 L675.0 317.1 L677.0 317.3 L679.0 317.5 L681.0 317.6 L683.0 317.8 L685.0 318.0 L687.0 318.2 L689.0 318.4 L691.0 318.5 L693.0 318.7 L695.0 318.9 L697.0 319.1 L699.0 319.3 L701.0 319.5 L703.0 319.6 L705.0 319.8 L707.0 320.0 L709.0 320.2 L711.0 320.4 L713.0 320.5 L715.0 320.7 L717.0 320.9 L719.0 321.1 L721.0 321.3 L723.0 321.5 L725.0 322.0 L727.0 322.6 L729.0 323.2 L731.0 324.3 L733.0 324.9 L735.0 325.5 L737.0 326.1 L739.0 326.7 L741.0 327.3 L743.0 327.9 L745.0 328.5 L747.0 329.1 L749.0 329.7 L751.0 330.3 L753.0 330.9 L755.0 331.5 L757.0 332.1 L759.0 332.7 L761.0 333.3 L763.0 333.9 L765.0 334.5 L767.0 335.1 L769.0 335.7 L771.0 336.3 L773.0 336.9 L775.0 337.5 L777.0 338.2 L779.0 338.8 L781.0 339.4 L783.0 340.0 L785.0 340.6 L787.0 341.2 L789.0 341.8 L791.0 342.4 L793.0 343.0 L795.0 343.6 L797.0 344.2 L799.0 344.8 L801.0 345.4 L803.0 346.0 L805.0 346.6 L807.0 347.2 L809.0 347.8 L811.0 348.4 L813.0 349.0 L815.0 349.6 L817.0 350.2 L819.0 350.8 L821.0 351.4 L823.0 352.0 L825.0 352.6 L827.0 353.2 L829.0 353.8 L831.0 354.5 L833.0 355.1 L835.0 355.7 L837.0 356.3 L839.0 356.9 L841.0 357.5 L843.0 358.1 L845.0 358.7 L847.0 359.3 L849.0 359.9 L851.0 360.5 L853.0 361.1 L855.0 361.7 L857.0 362.3 L859.0 362.9 L861.0 363.5 L863.0 364.1 L865.0 364.7 L867.0 365.3 L869.0 365.9 L871.0 366.5 L873.0 367.1 L875.0 367.7 L877.0 368.3 L879.0 368.9 L881.0 369.5 L883.0 370.2 L885.0 370.8 L887.0 371.4 L889.0 372.0 L891.0 372.6 L893.0 373.2 L895.0 373.8 L897.0 374.4 L899.0 375.0 L901.0 375.6 L903.0 376.2 L905.0 376.8 L907.0 377.4 L909.0 378.0 L911.0 378.6 L913.0 379.2 L915.0 379.8 L917.0 380.4 L919.0 381.0 L921.0 381.6 L923.0 382.2 L925.0 382.8 L927.0 383.4 L929.0 384.0 L931.0 384.6 L933.0 385.2 L935.0 385.8 L937.0 386.5 L939.0 387.1 L941.0 387.7 L943.0 388.3 L945.0 388.9 L947.0 389.5 L949.0 390.1 L951.0 390.7 L953.0 391.3 L955.0 391.9 L957.0 392.5 L957.0 402.2 L955.0 401.6 L953.0 400.5 L951.0 400.3 L949.0 400.2 L947.0 399.1 L945.0 398.5 L943.0 399.5 L941.0 400.2 L939.0 398.7 L937.0 396.1 L935.0 395.0 L933.0 395.1 L931.0 394.4 L929.0 393.3 L927.0 393.1 L925.0 392.9 L923.0 391.4 L921.0 389.7 L919.0 390.1 L917.0 391.7 L915.0 391.8 L913.0 390.3 L911.0 389.1 L909.0 388.7 L907.0 387.7 L905.0 386.2 L903.0 385.6 L901.0 385.6 L899.0 383.9 L897.0 380.8 L895.0 379.0 L893.0 379.3 L891.0 379.5 L889.0 378.5 L887.0 377.7 L885.0 377.7 L883.0 377.0 L881.0 375.5 L879.0 375.2 L877.0 376.5 L875.0 376.8 L873.0 374.8 L871.0 372.6 L869.0 371.9 L867.0 371.6 L865.0 370.6 L863.0 369.8 L861.0 370.0 L859.0 369.7 L857.0 367.9 L855.0 366.6 L853.0 367.7 L851.0 369.4 L849.0 369.4 L847.0 368.4 L845.0 368.1 L843.0 368.0 L841.0 367.0 L839.0 366.0 L837.0 366.4 L835.0 366.6 L833.0 364.7 L831.0 361.9 L829.0 360.8 L827.0 361.1 L825.0 360.9 L823.0 359.9 L821.0 359.6 L819.0 359.6 L817.0 358.4 L815.0 356.8 L813.0 356.9 L811.0 358.1 L809.0 357.8 L807.0 355.5 L805.0 353.6 L803.0 352.9 L801.0 351.9 L799.0 350.4 L797.0 349.8 L795.0 349.9 L793.0 348.9 L791.0 346.5 L789.0 345.5 L787.0 346.6 L785.0 347.8 L783.0 347.3 L781.0 346.7 L779.0 346.8 L777.0 346.4 L775.0 345.1 L773.0 344.6 L771.0 345.6 L769.0 345.7 L767.0 343.6 L765.0 341.2 L763.0 340.8 L761.0 341.1 L759.0 340.6 L757.0 340.0 L755.0 340.4 L753.0 340.4 L751.0 338.9 L749.0 337.7 L747.0 338.5 L745.0 339.8 L743.0 339.2 L741.0 337.1 L739.0 335.8 L737.0 335.0 L735.0 333.5 L733.0 331.9 L731.0 331.7 L729.0 331.1 L727.0 329.3 L725.0 326.6 L723.0 325.9 L721.0 327.3 L719.0 329.6 L717.0 329.2 L715.0 329.2 L713.0 329.7 L711.0 329.0 L709.0 327.8 L707.0 328.2 L705.0 329.6 L703.0 329.5 L701.0 327.5 L699.0 326.0 L697.0 326.2 L695.0 326.5 L693.0 326.1 L691.0 326.5 L689.0 327.7 L687.0 327.8 L685.0 326.6 L683.0 326.5 L681.0 328.3 L679.0 330.0 L677.0 329.7 L675.0 328.7 L673.0 328.5 L671.0 328.1 L669.0 326.8 L667.0 326.2 L665.0 327.0 L663.0 327.2 L661.0 325.3 L659.0 323.3 L657.0 323.4 L655.0 324.6 L653.0 324.7 L651.0 324.4 L649.0 324.8 L647.0 325.0 L645.0 323.7 L643.0 322.5 L641.0 323.1 L639.0 324.6 L637.0 324.2 L635.0 322.3 L633.0 321.4 L631.0 321.7 L629.0 321.5 L627.0 321.3 L625.0 322.3 L623.0 323.7 L621.0 323.5 L619.0 322.5 L617.0 323.1 L615.0 325.5 L613.0 327.1 L611.0 327.1 L609.0 327.1 L607.0 327.7 L605.0 327.4 L603.0 326.5 L601.0 326.9 L599.0 328.5 L597.0 328.9 L595.0 327.3 L593.0 326.3 L591.0 327.3 L589.0 328.6 L587.0 329.0 L585.0 329.6 L583.0 330.9 L581.0 331.2 L579.0 330.0 L577.0 329.6 L575.0 331.1 L573.0 332.3 L571.0 331.4 L569.0 329.8 L567.0 329.2 L565.0 329.0 L563.0 328.2 L561.0 327.9 L559.0 329.1 L557.0 330.0 L555.0 329.0 L553.0 327.8 L551.0 328.7 L549.0 330.8 L547.0 331.7 L545.0 331.6 L543.0 332.0 L541.0 332.3 L539.0 331.5 L537.0 330.6 L535.0 331.5 L533.0 333.1 L531.0 333.0 L529.0 331.4 L527.0 331.1 L525.0 332.3 L523.0 333.3 L521.0 333.8 L519.0 335.2 L517.0 336.9 L515.0 337.0 L513.0 336.0 L511.0 336.5 L509.0 338.5 L507.0 339.6 L505.0 338.8 L503.0 337.8 L501.0 337.7 L499.0 337.3 L497.0 336.3 L495.0 336.5 L493.0 338.0 L491.0 338.4 L489.0 337.0 L487.0 336.2 L485.0 337.4 L483.0 338.9 L481.0 339.3 L479.0 339.4 L477.0 340.0 L475.0 340.0 L473.0 338.5 L471.0 337.8 L469.0 339.0 L467.0 340.1 L465.0 339.3 L463.0 337.7 L461.0 337.7 L459.0 338.5 L457.0 338.8 L455.0 339.4 L453.0 341.2 L451.0 342.8 L449.0 342.4 L447.0 341.6 L445.0 342.7 L443.0 344.8 L441.0 345.6 L439.0 345.0 L437.0 344.8 L435.0 344.9 L433.0 344.1 L431.0 343.3 L429.0 344.2 L427.0 345.9 L425.0 346.0 L423.0 344.6 L421.0 344.3 L419.0 345.7 L417.0 346.9 L415.0 347.2 L413.0 347.8 L411.0 348.6 L409.0 348.0 L407.0 346.3 L405.0 345.9 L403.0 347.2 L401.0 347.7 L399.0 346.3 L397.0 344.8 L395.0 344.7 L393.0 344.8 L391.0 344.4 L389.0 345.0 L387.0 346.9 Z" fill="#70f060" filter="url(#bl4)"/>
<path d="M388.0 336.6 L390.0 336.4 L392.0 336.2 L394.0 336.0 L396.0 335.8 L398.0 335.7 L400.0 335.5 L402.0 335.3 L404.0 335.1 L406.0 334.9 L408.0 334.8 L410.0 334.6 L412.0 334.4 L414.0 334.2 L416.0 334.1 L418.0 333.9 L420.0 333.7 L422.0 333.5 L424.0 333.3 L426.0 333.2 L428.0 333.0 L430.0 332.8 L432.0 332.6 L434.0 332.5 L436.0 332.3 L438.0 332.1 L440.0 331.9 L442.0 331.7 L444.0 331.6 L446.0 331.4 L448.0 331.2 L450.0 331.0 L452.0 330.8 L454.0 330.7 L456.0 330.5 L458.0 330.3 L460.0 330.1 L462.0 330.0 L464.0 329.8 L466.0 329.6 L468.0 329.4 L470.0 329.2 L472.0 329.1 L474.0 328.9 L476.0 328.7 L478.0 328.5 L480.0 328.3 L482.0 328.2 L484.0 328.0 L486.0 327.8 L488.0 327.6 L490.0 327.5 L492.0 327.3 L494.0 327.1 L496.0 326.9 L498.0 326.7 L500.0 326.6 L502.0 326.4 L504.0 326.2 L506.0 326.0 L508.0 325.8 L510.0 325.7 L512.0 325.5 L514.0 325.3 L516.0 325.1 L518.0 325.0 L520.0 324.8 L522.0 324.6 L524.0 324.4 L526.0 324.2 L528.0 324.1 L530.0 323.9 L532.0 323.7 L534.0 323.5 L536.0 323.4 L538.0 323.2 L540.0 323.0 L542.0 322.8 L544.0 322.6 L546.0 322.5 L548.0 322.3 L550.0 322.1 L552.0 321.9 L554.0 321.7 L556.0 321.6 L558.0 321.4 L560.0 321.2 L562.0 321.0 L564.0 320.9 L566.0 320.7 L568.0 320.5 L570.0 320.3 L572.0 320.1 L574.0 320.0 L576.0 319.8 L578.0 319.6 L580.0 319.4 L582.0 319.2 L584.0 319.1 L586.0 318.9 L588.0 318.7 L590.0 318.5 L592.0 318.4 L594.0 318.2 L596.0 318.0 L598.0 317.8 L600.0 317.6 L602.0 317.5 L604.0 317.3 L606.0 317.1 L608.0 316.9 L610.0 316.8 L612.0 316.6 L614.0 316.4 L616.0 316.2 L618.0 316.0 L620.0 315.9 L622.0 315.7 L624.0 315.5 L626.0 315.3 L628.0 315.1 L630.0 315.0 L632.0 314.8 L634.0 314.6 L636.0 314.4 L638.0 314.3 L640.0 314.1 L642.0 314.1 L644.0 314.3 L646.0 314.5 L648.0 314.6 L650.0 314.8 L652.0 315.0 L654.0 315.2 L656.0 315.4 L658.0 315.5 L660.0 315.7 L662.0 315.9 L664.0 316.1 L666.0 316.3 L668.0 316.5 L670.0 316.6 L672.0 316.8 L674.0 317.0 L676.0 317.2 L678.0 317.4 L680.0 317.5 L682.0 317.7 L684.0 317.9 L686.0 318.1 L688.0 318.3 L690.0 318.5 L692.0 318.6 L694.0 318.8 L696.0 319.0 L698.0 319.2 L700.0 319.4 L702.0 319.5 L704.0 319.7 L706.0 319.9 L708.0 320.1 L710.0 320.3 L712.0 320.5 L714.0 320.6 L716.0 320.8 L718.0 321.0 L720.0 321.2 L722.0 321.4 L724.0 321.7 L726.0 322.3 L728.0 322.9 L730.0 324.0 L732.0 324.6 L734.0 325.2 L736.0 325.8 L738.0 326.4 L740.0 327.0 L742.0 327.6 L744.0 328.2 L746.0 328.8 L748.0 329.4 L750.0 330.0 L752.0 330.6 L754.0 331.2 L756.0 331.8 L758.0 332.4 L760.0 333.0 L762.0 333.6 L764.0 334.2 L766.0 334.8 L768.0 335.4 L770.0 336.0 L772.0 336.6 L774.0 337.2 L776.0 337.8 L778.0 338.5 L780.0 339.1 L782.0 339.7 L784.0 340.3 L786.0 340.9 L788.0 341.5 L790.0 342.1 L792.0 342.7 L794.0 343.3 L796.0 343.9 L798.0 344.5 L800.0 345.1 L802.0 345.7 L804.0 346.3 L806.0 346.9 L808.0 347.5 L810.0 348.1 L812.0 348.7 L814.0 349.3 L816.0 349.9 L818.0 350.5 L820.0 351.1 L822.0 351.7 L824.0 352.3 L826.0 352.9 L828.0 353.5 L830.0 354.2 L832.0 354.8 L834.0 355.4 L836.0 356.0 L838.0 356.6 L840.0 357.2 L842.0 357.8 L844.0 358.4 L846.0 359.0 L848.0 359.6 L850.0 360.2 L852.0 360.8 L854.0 361.4 L856.0 362.0 L858.0 362.6 L860.0 363.2 L862.0 363.8 L864.0 364.4 L866.0 365.0 L868.0 365.6 L870.0 366.2 L872.0 366.8 L874.0 367.4 L876.0 368.0 L878.0 368.6 L880.0 369.2 L882.0 369.8 L884.0 370.5 L886.0 371.1 L888.0 371.7 L890.0 372.3 L892.0 372.9 L894.0 373.5 L896.0 374.1 L898.0 374.7 L900.0 375.3 L902.0 375.9 L904.0 376.5 L906.0 377.1 L908.0 377.7 L910.0 378.3 L912.0 378.9 L914.0 379.5 L916.0 380.1 L918.0 380.7 L920.0 381.3 L922.0 381.9 L924.0 382.5 L926.0 383.1 L928.0 383.7 L930.0 384.3 L932.0 384.9 L934.0 385.5 L936.0 386.2 L938.0 386.8 L940.0 387.4 L942.0 388.0 L944.0 388.6 L946.0 389.2 L948.0 389.8 L950.0 390.4 L952.0 391.0 L954.0 391.6 L956.0 392.2 L956.0 401.6 L954.0 400.5 L952.0 399.4 L950.0 397.8 L948.0 397.5 L946.0 398.0 L944.0 397.3 L942.0 395.0 L940.0 393.7 L938.0 394.4 L936.0 395.1 L934.0 394.2 L932.0 392.9 L930.0 392.2 L928.0 391.0 L926.0 388.8 L924.0 387.5 L922.0 388.1 L920.0 388.2 L918.0 386.3 L916.0 384.2 L914.0 383.9 L912.0 384.5 L910.0 384.4 L908.0 384.3 L906.0 385.0 L904.0 385.2 L902.0 383.6 L900.0 381.9 L898.0 382.3 L896.0 383.3 L894.0 382.6 L892.0 380.5 L890.0 379.2 L888.0 378.4 L886.0 377.0 L884.0 375.8 L882.0 376.1 L880.0 376.9 L878.0 375.8 L876.0 373.6 L874.0 372.9 L872.0 373.8 L870.0 374.0 L868.0 373.0 L866.0 372.3 L864.0 371.7 L862.0 369.9 L860.0 367.5 L858.0 366.6 L856.0 367.2 L854.0 366.7 L852.0 364.4 L850.0 362.6 L848.0 362.4 L846.0 362.5 L844.0 362.0 L842.0 362.2 L840.0 363.3 L838.0 363.2 L836.0 361.4 L834.0 360.3 L832.0 361.1 L830.0 361.9 L828.0 360.9 L826.0 359.4 L824.0 358.6 L822.0 357.8 L820.0 356.1 L818.0 355.4 L816.0 356.4 L814.0 357.1 L812.0 355.8 L810.0 354.0 L808.0 354.0 L806.0 355.0 L804.0 354.9 L802.0 354.3 L800.0 354.2 L798.0 353.7 L796.0 351.5 L794.0 349.1 L792.0 348.8 L790.0 349.3 L788.0 348.1 L786.0 345.7 L784.0 344.1 L782.0 343.7 L780.0 343.0 L778.0 342.2 L776.0 342.7 L774.0 343.6 L772.0 342.7 L770.0 340.5 L768.0 339.7 L766.0 340.6 L764.0 340.7 L762.0 339.4 L760.0 338.2 L758.0 337.6 L756.0 336.2 L754.0 334.3 L752.0 333.9 L750.0 335.2 L748.0 335.5 L746.0 333.9 L744.0 332.7 L742.0 333.3 L740.0 334.0 L738.0 333.9 L736.0 333.9 L734.0 334.5 L732.0 334.0 L730.0 331.7 L728.0 329.5 L726.0 329.8 L724.0 330.2 L722.0 329.1 L720.0 327.4 L718.0 328.3 L716.0 328.1 L714.0 327.3 L712.0 327.1 L710.0 328.5 L708.0 329.5 L706.0 328.4 L704.0 326.7 L702.0 326.8 L700.0 327.8 L698.0 327.7 L696.0 326.7 L694.0 326.2 L692.0 325.6 L690.0 323.9 L688.0 322.1 L686.0 322.5 L684.0 323.9 L682.0 323.8 L680.0 322.4 L678.0 322.0 L676.0 322.9 L674.0 323.5 L672.0 323.7 L670.0 324.7 L668.0 326.0 L666.0 325.5 L664.0 323.6 L662.0 323.0 L660.0 324.2 L658.0 324.8 L656.0 323.7 L654.0 322.8 L652.0 322.7 L650.0 322.3 L648.0 321.4 L646.0 321.8 L644.0 323.6 L642.0 324.5 L640.0 323.4 L638.0 322.6 L636.0 323.5 L634.0 324.7 L632.0 324.7 L630.0 324.4 L628.0 324.6 L626.0 324.1 L624.0 322.1 L622.0 320.9 L620.0 321.8 L618.0 323.1 L616.0 322.6 L614.0 321.5 L612.0 321.6 L610.0 322.4 L608.0 322.7 L606.0 323.1 L604.0 324.7 L602.0 326.1 L600.0 325.3 L598.0 323.8 L596.0 324.0 L594.0 325.4 L592.0 325.8 L590.0 325.1 L588.0 325.0 L586.0 325.3 L584.0 324.8 L582.0 324.3 L580.0 325.7 L578.0 328.2 L576.0 329.1 L574.0 328.3 L572.0 328.3 L570.0 329.6 L568.0 330.6 L566.0 330.7 L564.0 331.2 L562.0 331.9 L560.0 331.2 L558.0 329.1 L556.0 328.4 L554.0 329.7 L552.0 330.6 L550.0 329.8 L548.0 329.0 L546.0 329.4 L544.0 329.7 L542.0 329.5 L540.0 330.1 L538.0 332.0 L536.0 332.8 L534.0 331.4 L532.0 330.0 L530.0 330.4 L528.0 331.4 L526.0 331.2 L524.0 330.5 L522.0 330.6 L520.0 330.5 L518.0 329.4 L516.0 328.9 L514.0 330.7 L512.0 332.9 L510.0 333.3 L508.0 332.7 L506.0 333.3 L504.0 334.7 L502.0 335.4 L500.0 335.8 L498.0 337.0 L496.0 338.0 L494.0 337.1 L492.0 335.4 L490.0 335.5 L488.0 337.1 L486.0 337.7 L484.0 337.1 L482.0 337.0 L480.0 337.7 L478.0 337.8 L476.0 337.6 L474.0 338.9 L472.0 341.2 L470.0 341.6 L468.0 340.2 L466.0 339.3 L464.0 340.0 L462.0 340.5 L460.0 339.9 L458.0 339.5 L456.0 339.7 L454.0 338.9 L452.0 337.2 L450.0 336.8 L448.0 338.6 L446.0 340.1 L444.0 339.8 L442.0 339.2 L440.0 339.9 L438.0 340.8 L436.0 340.9 L434.0 341.4 L432.0 343.0 L430.0 343.6 L428.0 342.1 L426.0 340.6 L424.0 341.2 L422.0 342.6 L420.0 342.8 L418.0 342.4 L416.0 342.9 L414.0 343.5 L412.0 343.2 L410.0 343.4 L408.0 345.4 L406.0 347.8 L404.0 348.0 L402.0 346.8 L400.0 346.7 L398.0 347.6 L396.0 347.8 L394.0 347.3 L392.0 347.5 L390.0 347.8 L388.0 346.5 Z" fill="#f0f000" filter="url(#bl4)"/>
<path d="M388.0 337.1 L390.0 336.9 L392.0 336.7 L394.0 336.5 L396.0 336.3 L398.0 336.2 L400.0 336.0 L402.0 335.8 L404.0 335.6 L406.0 335.4 L408.0 335.3 L410.0 335.1 L412.0 334.9 L414.0 334.7 L416.0 334.6 L418.0 334.4 L420.0 334.2 L422.0 334.0 L424.0 333.8 L426.0 333.7 L428.0 333.5 L430.0 333.3 L432.0 333.1 L434.0 333.0 L436.0 332.8 L438.0 332.6 L440.0 332.4 L442.0 332.2 L444.0 332.1 L446.0 331.9 L448.0 331.7 L450.0 331.5 L452.0 331.3 L454.0 331.2 L456.0 331.0 L458.0 330.8 L460.0 330.6 L462.0 330.5 L464.0 330.3 L466.0 330.1 L468.0 329.9 L470.0 329.7 L472.0 329.6 L474.0 329.4 L476.0 329.2 L478.0 329.0 L480.0 328.8 L482.0 328.7 L484.0 328.5 L486.0 328.3 L488.0 328.1 L490.0 328.0 L492.0 327.8 L494.0 327.6 L496.0 327.4 L498.0 327.2 L500.0 327.1 L502.0 326.9 L504.0 326.7 L506.0 326.5 L508.0 326.3 L510.0 326.2 L512.0 326.0 L514.0 325.8 L516.0 325.6 L518.0 325.5 L520.0 325.3 L522.0 325.1 L524.0 324.9 L526.0 324.7 L528.0 324.6 L530.0 324.4 L532.0 324.2 L534.0 324.0 L536.0 323.9 L538.0 323.7 L540.0 323.5 L542.0 323.3 L544.0 323.1 L546.0 323.0 L548.0 322.8 L550.0 322.6 L552.0 322.4 L554.0 322.2 L556.0 322.1 L558.0 321.9 L560.0 321.7 L562.0 321.5 L564.0 321.4 L566.0 321.2 L568.0 321.0 L570.0 320.8 L572.0 320.6 L574.0 320.5 L576.0 320.3 L578.0 320.1 L580.0 319.9 L582.0 319.7 L584.0 319.6 L586.0 319.4 L588.0 319.2 L590.0 319.0 L592.0 318.9 L594.0 318.7 L596.0 318.5 L598.0 318.3 L600.0 318.1 L602.0 318.0 L604.0 317.8 L606.0 317.6 L608.0 317.4 L610.0 317.2 L612.0 317.1 L614.0 316.9 L616.0 316.7 L618.0 316.5 L620.0 316.4 L622.0 316.2 L624.0 316.0 L626.0 315.8 L628.0 315.6 L630.0 315.5 L632.0 315.3 L634.0 315.1 L636.0 314.9 L638.0 314.8 L640.0 314.6 L642.0 314.6 L644.0 314.8 L646.0 315.0 L648.0 315.1 L650.0 315.3 L652.0 315.5 L654.0 315.7 L656.0 315.9 L658.0 316.0 L660.0 316.2 L662.0 316.4 L664.0 316.6 L666.0 316.8 L668.0 317.0 L670.0 317.1 L672.0 317.3 L674.0 317.5 L676.0 317.7 L678.0 317.9 L680.0 318.0 L682.0 318.2 L684.0 318.4 L686.0 318.6 L688.0 318.8 L690.0 319.0 L692.0 319.1 L694.0 319.3 L696.0 319.5 L698.0 319.7 L700.0 319.9 L702.0 320.0 L704.0 320.2 L706.0 320.4 L708.0 320.6 L710.0 320.8 L712.0 321.0 L714.0 321.1 L716.0 321.3 L718.0 321.5 L720.0 321.7 L722.0 321.9 L724.0 322.2 L726.0 322.8 L728.0 323.4 L730.0 324.5 L732.0 325.1 L734.0 325.7 L736.0 326.3 L738.0 326.9 L740.0 327.5 L742.0 328.1 L744.0 328.7 L746.0 329.3 L748.0 329.9 L750.0 330.5 L752.0 331.1 L754.0 331.7 L756.0 332.3 L758.0 332.9 L760.0 333.5 L762.0 334.1 L764.0 334.7 L766.0 335.3 L768.0 335.9 L770.0 336.5 L772.0 337.1 L774.0 337.7 L776.0 338.3 L778.0 339.0 L780.0 339.6 L782.0 340.2 L784.0 340.8 L786.0 341.4 L788.0 342.0 L790.0 342.6 L792.0 343.2 L794.0 343.8 L796.0 344.4 L798.0 345.0 L800.0 345.6 L802.0 346.2 L804.0 346.8 L806.0 347.4 L808.0 348.0 L810.0 348.6 L812.0 349.2 L814.0 349.8 L816.0 350.4 L818.0 351.0 L820.0 351.6 L822.0 352.2 L824.0 352.8 L826.0 353.4 L828.0 354.0 L830.0 354.7 L832.0 355.3 L834.0 355.9 L836.0 356.5 L838.0 357.1 L840.0 357.7 L842.0 358.3 L844.0 358.9 L846.0 359.5 L848.0 360.1 L850.0 360.7 L852.0 361.3 L854.0 361.9 L856.0 362.5 L858.0 363.1 L860.0 363.7 L862.0 364.3 L864.0 364.9 L866.0 365.5 L868.0 366.1 L870.0 366.7 L872.0 367.3 L874.0 367.9 L876.0 368.5 L878.0 369.1 L880.0 369.7 L882.0 370.3 L884.0 371.0 L886.0 371.6 L888.0 372.2 L890.0 372.8 L892.0 373.4 L894.0 374.0 L896.0 374.6 L898.0 375.2 L900.0 375.8 L902.0 376.4 L904.0 377.0 L906.0 377.6 L908.0 378.2 L910.0 378.8 L912.0 379.4 L914.0 380.0 L916.0 380.6 L918.0 381.2 L920.0 381.8 L922.0 382.4 L924.0 383.0 L926.0 383.6 L928.0 384.2 L930.0 384.8 L932.0 385.4 L934.0 386.0 L936.0 386.7 L938.0 387.3 L940.0 387.9 L942.0 388.5 L944.0 389.1 L946.0 389.7 L948.0 390.3 L950.0 390.9 L952.0 391.5 L954.0 392.1 L954.0 399.8 L952.0 398.5 L950.0 397.9 L948.0 396.8 L946.0 394.6 L944.0 393.5 L942.0 394.5 L940.0 395.4 L938.0 394.2 L936.0 392.4 L934.0 391.7 L932.0 391.3 L930.0 390.0 L928.0 389.0 L926.0 389.0 L924.0 388.4 L922.0 386.0 L920.0 383.8 L918.0 383.2 L916.0 384.1 L914.0 383.9 L912.0 382.9 L910.0 382.7 L908.0 382.9 L906.0 382.0 L904.0 381.2 L902.0 382.0 L900.0 383.2 L898.0 382.5 L896.0 380.1 L894.0 378.7 L892.0 378.6 L890.0 378.1 L888.0 376.9 L886.0 376.4 L884.0 376.2 L882.0 374.8 L880.0 372.7 L878.0 372.3 L876.0 373.7 L874.0 374.3 L872.0 373.0 L870.0 371.7 L868.0 371.3 L866.0 370.5 L864.0 369.0 L862.0 368.4 L860.0 368.6 L858.0 367.6 L856.0 364.6 L854.0 363.9 L852.0 363.3 L850.0 362.7 L848.0 362.1 L846.0 361.5 L844.0 361.2 L842.0 361.0 L840.0 359.7 L838.0 359.2 L836.0 360.6 L834.0 361.7 L832.0 360.5 L830.0 358.5 L828.0 357.7 L826.0 357.6 L824.0 356.7 L822.0 355.8 L820.0 355.9 L818.0 355.9 L816.0 354.1 L814.0 352.3 L812.0 352.7 L810.0 354.3 L808.0 354.6 L806.0 353.5 L804.0 353.0 L802.0 352.8 L800.0 351.8 L798.0 350.4 L796.0 350.4 L794.0 350.8 L792.0 349.3 L790.0 346.2 L788.0 344.3 L786.0 344.2 L784.0 343.9 L782.0 342.8 L780.0 342.3 L778.0 342.3 L776.0 341.3 L774.0 339.7 L772.0 339.3 L770.0 340.7 L768.0 341.2 L766.0 339.5 L764.0 337.7 L762.0 337.0 L760.0 336.4 L758.0 335.1 L756.0 334.4 L754.0 334.8 L752.0 334.3 L750.0 332.5 L748.0 331.9 L746.0 331.5 L744.0 332.9 L742.0 332.9 L740.0 332.3 L738.0 332.4 L736.0 332.3 L734.0 331.1 L732.0 330.3 L730.0 331.1 L728.0 331.1 L726.0 329.3 L724.0 326.6 L722.0 325.7 L720.0 326.1 L718.0 327.3 L716.0 326.8 L714.0 327.2 L712.0 327.6 L710.0 326.5 L708.0 325.2 L706.0 325.8 L704.0 327.6 L702.0 327.9 L700.0 326.4 L698.0 325.4 L696.0 325.1 L694.0 324.1 L692.0 322.9 L690.0 322.8 L688.0 323.5 L686.0 322.6 L684.0 320.4 L682.0 320.2 L680.0 320.8 L678.0 321.9 L676.0 322.0 L674.0 322.1 L672.0 322.9 L670.0 322.8 L668.0 321.8 L666.0 321.9 L664.0 323.6 L662.0 324.3 L660.0 322.8 L658.0 321.1 L656.0 320.9 L654.0 321.1 L652.0 320.7 L650.0 320.7 L648.0 321.7 L646.0 322.0 L644.0 320.7 L642.0 319.9 L640.0 321.3 L638.0 323.5 L636.0 323.8 L634.0 323.1 L632.0 323.0 L630.0 323.0 L628.0 322.0 L626.0 321.2 L624.0 321.9 L622.0 322.7 L620.0 321.5 L618.0 319.5 L616.0 319.2 L614.0 320.5 L612.0 321.2 L610.0 321.3 L608.0 322.1 L606.0 323.0 L604.0 322.6 L602.0 321.7 L600.0 322.5 L598.0 324.5 L596.0 324.9 L594.0 323.5 L592.0 322.6 L590.0 322.8 L588.0 322.9 L586.0 322.6 L584.0 323.5 L582.0 325.1 L580.0 325.4 L578.0 324.3 L576.0 324.5 L574.0 326.7 L572.0 328.6 L570.0 328.9 L568.0 328.9 L566.0 329.5 L564.0 329.4 L562.0 328.3 L560.0 328.1 L558.0 329.5 L556.0 330.1 L554.0 328.6 L552.0 326.9 L550.0 327.1 L548.0 328.1 L546.0 328.4 L544.0 328.6 L542.0 329.8 L540.0 330.3 L538.0 329.3 L536.0 328.4 L534.0 329.6 L532.0 331.3 L530.0 331.0 L528.0 329.5 L526.0 328.9 L524.0 328.9 L522.0 328.2 L520.0 327.8 L518.0 328.9 L516.0 330.3 L514.0 329.9 L512.0 328.7 L510.0 329.3 L508.0 331.6 L506.0 333.1 L504.0 333.4 L502.0 334.1 L500.0 334.9 L498.0 334.6 L496.0 333.6 L494.0 334.3 L492.0 336.1 L490.0 336.5 L488.0 335.0 L486.0 334.1 L484.0 334.8 L482.0 335.6 L480.0 335.8 L478.0 336.8 L476.0 338.4 L474.0 338.8 L472.0 337.6 L470.0 337.4 L468.0 339.1 L466.0 340.5 L464.0 339.9 L462.0 338.8 L460.0 338.5 L458.0 338.0 L456.0 336.8 L454.0 336.4 L452.0 337.7 L450.0 338.5 L448.0 337.3 L446.0 336.1 L444.0 336.8 L442.0 338.5 L440.0 339.2 L438.0 339.5 L436.0 340.4 L434.0 340.9 L432.0 339.9 L430.0 339.0 L428.0 340.0 L426.0 341.7 L424.0 341.5 L422.0 340.0 L420.0 339.6 L418.0 340.3 L416.0 340.7 L414.0 341.0 L412.0 342.5 L410.0 344.4 L408.0 344.4 L406.0 343.4 L404.0 344.0 L402.0 346.0 L400.0 347.1 L398.0 346.7 L396.0 346.3 L394.0 346.3 L392.0 345.5 L390.0 344.1 L388.0 344.3 Z" fill="#e01010" filter="url(#bl4)"/>
<ellipse cx="420" cy="350" rx="6" ry="2" fill="#50e0e0" filter="url(#bl4)"/>
<ellipse cx="600" cy="332" rx="5" ry="2.5" fill="#60f040" filter="url(#bl4)"/>
<ellipse cx="620" cy="330" rx="6" ry="2.5" fill="#a0f040" filter="url(#bl4)"/>
<ellipse cx="708" cy="326" rx="4" ry="2" fill="#60f060" filter="url(#bl4)"/>
<ellipse cx="760" cy="340" rx="4" ry="2" fill="#a0f040" filter="url(#bl4)"/>
<ellipse cx="935" cy="392" rx="6" ry="2" fill="#50e8b0" filter="url(#bl4)"/>
<ellipse cx="641" cy="321" rx="8" ry="5" fill="#ff1010"/>
<path d="M298.5 225.5 L1054 225.5 L1054 391 L962 391.5 L723.5 319.5 L641 312 L301 337 Z" fill="none" stroke="#5ccc78" stroke-width="2"/>
<rect x="285" y="221.5" width="798" height="498.5" fill="none" stroke="#60c87c" stroke-width="2.2"/>
<circle cx="756" cy="307" r="2" fill="none" stroke="#8090c0" stroke-width="0.8"/>
<ellipse cx="922" cy="314" rx="4" ry="1.8" fill="#f06040"/>
<ellipse cx="490" cy="400" rx="2.5" ry="2" fill="#c0e0ff"/>
<ellipse cx="665" cy="407" rx="3" ry="2" fill="#c0e0ff"/>
<path d="M622 405 L630 412 L622 416 Z" fill="#40e0a0"/>
<ellipse cx="838" cy="422" rx="5" ry="2.5" fill="#40e080"/>
<ellipse cx="573" cy="348" rx="4" ry="2" fill="#50e0a0"/>
<path d="M333 358 h4 M333 358 v4" stroke="#c0e0ff" stroke-width="1"/>
<ellipse cx="490" cy="469" rx="3" ry="20" fill="#0030e0" opacity="0.6" filter="url(#bl3)"/>
<ellipse cx="490" cy="461" rx="2.6" ry="13.5" fill="#f0f040"/>
<ellipse cx="490" cy="461" rx="1.6" ry="11.5" fill="#e01010"/>
<ellipse cx="663" cy="471" rx="3" ry="20" fill="#0030e0" opacity="0.6" filter="url(#bl3)"/>
<ellipse cx="663" cy="463" rx="2.6" ry="13.5" fill="#f0f040"/>
<ellipse cx="663" cy="463" rx="1.6" ry="11.5" fill="#e01010"/>
<g filter="url(#bl4)"><path d="M592 448 V472 M620 446 V470 M692 440 V465" stroke="#4070ff" stroke-width="1.5" opacity="0.9"/></g>
<filter id="bl6" x="-30%" y="-100%" width="160%" height="300%"><feGaussianBlur stdDeviation="11"/></filter>
<path d="M380 500 Q500 505 600 528 Q700 535 760 512 Q880 490 940 486 L940 548 Q860 556 760 556 Q680 572 600 568 Q500 558 380 542 Z" fill="#0018d8" filter="url(#bl6)" opacity="1"/>
<path d="M385 508 Q500 512 600 534 Q700 540 760 518 Q880 496 935 492 L935 538 Q860 546 760 548 Q680 562 600 560 Q500 550 385 532 Z" fill="#0020f0" filter="url(#bl2)" opacity="0.55"/>
<g filter="url(#bl5)">
<rect x="377.2" y="504.0" width="11.2" height="2.6" rx="1" fill="#60f050"/>
<rect x="375.1" y="507.2" width="17.7" height="2.6" rx="1" fill="#30d8c0"/>
<rect x="374.8" y="511.3" width="14.5" height="2.6" rx="1" fill="#60f060"/>
<rect x="378.9" y="515.4" width="9.7" height="2.6" rx="1" fill="#30d8c0"/>
<rect x="372.3" y="518.2" width="17.2" height="2.6" rx="1" fill="#60f060"/>
<rect x="377.1" y="522.1" width="13.8" height="2.6" rx="1" fill="#30d8c0"/>
<rect x="376.4" y="525.9" width="9.9" height="2.6" rx="1" fill="#30d8c0"/>
<rect x="375.8" y="529.8" width="15.8" height="2.6" rx="1" fill="#40e0a0"/>
<rect x="383.8" y="504.0" width="17.4" height="2.6" rx="1" fill="#40e0a0"/>
<rect x="385.9" y="507.5" width="14.9" height="2.6" rx="1" fill="#30d8c0"/>
<rect x="385.9" y="510.5" width="16.0" height="2.6" rx="1" fill="#60f060"/>
<rect x="388.9" y="513.3" width="11.5" height="2.6" rx="1" fill="#60f050"/>
<rect x="385.9" y="517.3" width="16.9" height="2.6" rx="1" fill="#60f050"/>
<rect x="386.7" y="520.2" width="15.0" height="2.6" rx="1" fill="#30d8c0"/>
<rect x="386.3" y="523.2" width="18.5" height="2.6" rx="1" fill="#30d8c0"/>
<rect x="384.6" y="526.4" width="18.8" height="2.6" rx="1" fill="#80f040"/>
<rect x="385.5" y="530.8" width="13.3" height="2.6" rx="1" fill="#40e0a0"/>
<rect x="399.7" y="504.0" width="16.5" height="2.6" rx="1" fill="#40e0a0"/>
<rect x="399.6" y="507.6" width="14.9" height="2.6" rx="1" fill="#60f060"/>
<rect x="401.6" y="511.2" width="12.7" height="2.6" rx="1" fill="#40e0a0"/>
<rect x="399.8" y="514.3" width="11.2" height="2.6" rx="1" fill="#80f040"/>
<rect x="397.6" y="517.6" width="15.3" height="2.6" rx="1" fill="#40e0a0"/>
<rect x="395.5" y="520.6" width="18.5" height="2.6" rx="1" fill="#30d8c0"/>
<rect x="398.6" y="523.9" width="16.2" height="2.6" rx="1" fill="#60f050"/>
<rect x="401.2" y="528.3" width="13.5" height="2.6" rx="1" fill="#60f050"/>
<rect x="408.9" y="504.0" width="18.1" height="2.6" rx="1" fill="#30d8c0"/>
<rect x="407.7" y="507.9" width="18.6" height="2.6" rx="1" fill="#20c8f0"/>
<rect x="410.4" y="510.7" width="17.3" height="2.6" rx="1" fill="#30d8c0"/>
<rect x="413.2" y="513.5" width="12.4" height="2.6" rx="1" fill="#60f050"/>
<rect x="409.9" y="516.7" width="13.6" height="2.6" rx="1" fill="#40e0a0"/>
<rect x="408.7" y="520.9" width="15.8" height="2.6" rx="1" fill="#60f060"/>
<rect x="409.9" y="524.9" width="14.2" height="2.6" rx="1" fill="#60f050"/>
<rect x="407.8" y="528.5" width="16.6" height="2.6" rx="1" fill="#60f060"/>
<rect x="444.9" y="515.0" width="11.5" height="2.6" rx="1" fill="#40e0c0"/>
<rect x="446.3" y="518.5" width="12.0" height="2.6" rx="1" fill="#1aa8f8"/>
<rect x="444.7" y="521.6" width="12.9" height="2.6" rx="1" fill="#20c8f0"/>
<rect x="448.1" y="524.7" width="9.5" height="2.6" rx="1" fill="#40e0c0"/>
<rect x="446.5" y="528.3" width="13.8" height="2.6" rx="1" fill="#1aa8f8"/>
<rect x="447.9" y="531.2" width="11.8" height="2.6" rx="1" fill="#30d8e0"/>
<rect x="445.8" y="534.0" width="9.2" height="2.6" rx="1" fill="#20c8f0"/>
<rect x="442.8" y="537.6" width="15.0" height="2.6" rx="1" fill="#20c8f0"/>
<rect x="473.4" y="515.0" width="9.5" height="2.6" rx="1" fill="#40e0c0"/>
<rect x="470.6" y="518.2" width="15.9" height="2.6" rx="1" fill="#30d8e0"/>
<rect x="473.1" y="521.0" width="11.6" height="2.6" rx="1" fill="#20c8f0"/>
<rect x="472.7" y="524.6" width="12.6" height="2.6" rx="1" fill="#20c8f0"/>
<rect x="473.6" y="528.4" width="8.5" height="2.6" rx="1" fill="#20c8f0"/>
<rect x="472.8" y="531.6" width="13.2" height="2.6" rx="1" fill="#30d8e0"/>
<rect x="470.1" y="534.6" width="14.3" height="2.6" rx="1" fill="#20c8f0"/>
<rect x="474.0" y="537.5" width="9.7" height="2.6" rx="1" fill="#40e0c0"/>
<rect x="492.4" y="515.0" width="15.1" height="2.6" rx="1" fill="#20c8f0"/>
<rect x="495.9" y="518.4" width="8.9" height="2.6" rx="1" fill="#40e0c0"/>
<rect x="495.3" y="522.5" width="11.0" height="2.6" rx="1" fill="#30d8e0"/>
<rect x="494.3" y="525.2" width="15.2" height="2.6" rx="1" fill="#40e0c0"/>
<rect x="492.7" y="527.9" width="13.9" height="2.6" rx="1" fill="#20c8f0"/>
<rect x="494.4" y="531.5" width="13.7" height="2.6" rx="1" fill="#1aa8f8"/>
<rect x="492.5" y="534.8" width="16.4" height="2.6" rx="1" fill="#1aa8f8"/>
<rect x="495.1" y="538.2" width="12.7" height="2.6" rx="1" fill="#20c8f0"/>
<rect x="520" y="521" width="44" height="32" rx="2" fill="#40e090"/>
<rect x="521.2" y="523.0" width="37.5" height="2.4" rx="1" fill="#90f040"/>
<rect x="522.1" y="526.2" width="38.7" height="2.4" rx="1" fill="#60f050"/>
<rect x="523.9" y="529.4" width="37.6" height="2.4" rx="1" fill="#90f040"/>
<rect x="522.6" y="532.6" width="36.6" height="2.4" rx="1" fill="#90f040"/>
<rect x="523.5" y="535.8" width="41.7" height="2.4" rx="1" fill="#70f040"/>
<rect x="521.1" y="539.0" width="35.4" height="2.4" rx="1" fill="#b0f030"/>
<rect x="523.9" y="542.2" width="41.1" height="2.4" rx="1" fill="#60f050"/>
<rect x="523.5" y="545.4" width="40.1" height="2.4" rx="1" fill="#d0f020"/>
<rect x="523.8" y="548.6" width="39.5" height="2.4" rx="1" fill="#90f040"/>
<rect x="591.6" y="533.9" width="7.8" height="2.6" rx="1" fill="#40e0a0"/>
<rect x="588.1" y="539.1" width="11.9" height="2.6" rx="1" fill="#40e0c0"/>
<rect x="591.2" y="542.7" width="11.3" height="2.6" rx="1" fill="#20c8f0"/>
<rect x="592.0" y="547.0" width="6.5" height="2.6" rx="1" fill="#1aa8f8"/>
<rect x="590.0" y="551.6" width="8.8" height="2.6" rx="1" fill="#30d8e0"/>
<rect x="591.7" y="556.3" width="7.2" height="2.6" rx="1" fill="#40e0a0"/>
<rect x="594.0" y="560.8" width="7.6" height="2.6" rx="1" fill="#40e0c0"/>
<rect x="608.3" y="535.8" width="11.4" height="2.6" rx="1" fill="#30d8e0"/>
<rect x="609.7" y="540.2" width="7.7" height="2.6" rx="1" fill="#1aa8f8"/>
<rect x="610.2" y="544.3" width="8.6" height="2.6" rx="1" fill="#40e0c0"/>
<rect x="609.5" y="548.8" width="10.0" height="2.6" rx="1" fill="#20c8f0"/>
<rect x="606.3" y="552.4" width="11.8" height="2.6" rx="1" fill="#40e0c0"/>
<rect x="607.7" y="555.7" width="9.0" height="2.6" rx="1" fill="#40e0a0"/>
<rect x="611.6" y="559.7" width="8.7" height="2.6" rx="1" fill="#40e0a0"/>
<rect x="606.8" y="563.2" width="11.8" height="2.6" rx="1" fill="#40e0c0"/>
<rect x="629.9" y="533.5" width="10.8" height="2.6" rx="1" fill="#40e0a0"/>
<rect x="629.7" y="538.4" width="7.9" height="2.6" rx="1" fill="#40e0a0"/>
<rect x="630.6" y="542.1" width="9.4" height="2.6" rx="1" fill="#40e0a0"/>
<rect x="626.4" y="547.1" width="11.3" height="2.6" rx="1" fill="#40e0a0"/>
<rect x="631.0" y="550.4" width="8.6" height="2.6" rx="1" fill="#30d8e0"/>
<rect x="629.6" y="554.0" width="9.0" height="2.6" rx="1" fill="#40e0a0"/>
<rect x="630.8" y="558.4" width="8.8" height="2.6" rx="1" fill="#40e0c0"/>
<rect x="647.1" y="532.6" width="9.8" height="2.6" rx="1" fill="#20c8f0"/>
<rect x="648.8" y="537.2" width="7.1" height="2.6" rx="1" fill="#30d8e0"/>
<rect x="648.6" y="541.1" width="8.1" height="2.6" rx="1" fill="#40e0a0"/>
<rect x="649.6" y="545.3" width="10.1" height="2.6" rx="1" fill="#30d8e0"/>
<rect x="649.7" y="548.5" width="7.4" height="2.6" rx="1" fill="#40e0c0"/>
<rect x="649.8" y="552.5" width="10.1" height="2.6" rx="1" fill="#40e0a0"/>
<rect x="648.9" y="556.6" width="7.9" height="2.6" rx="1" fill="#40e0a0"/>
<rect x="665.8" y="533.4" width="9.8" height="2.6" rx="1" fill="#40e0c0"/>
<rect x="669.9" y="537.6" width="7.0" height="2.6" rx="1" fill="#20c8f0"/>
<rect x="665.8" y="542.6" width="10.1" height="2.6" rx="1" fill="#40e0a0"/>
<rect x="668.2" y="546.9" width="11.5" height="2.6" rx="1" fill="#1aa8f8"/>
<rect x="668.4" y="550.5" width="8.8" height="2.6" rx="1" fill="#40e0c0"/>
<rect x="668.4" y="553.7" width="8.1" height="2.6" rx="1" fill="#40e0a0"/>
<rect x="668.9" y="557.0" width="8.3" height="2.6" rx="1" fill="#30d8e0"/>
<rect x="688.4" y="534.1" width="7.2" height="2.6" rx="1" fill="#40e0a0"/>
<rect x="686.7" y="537.9" width="8.7" height="2.6" rx="1" fill="#40e0c0"/>
<rect x="686.7" y="542.9" width="7.4" height="2.6" rx="1" fill="#40e0c0"/>
<rect x="684.0" y="547.2" width="10.9" height="2.6" rx="1" fill="#30d8e0"/>
<rect x="686.1" y="552.4" width="11.5" height="2.6" rx="1" fill="#20c8f0"/>
<rect x="685.7" y="557.6" width="10.4" height="2.6" rx="1" fill="#30d8e0"/>
<rect x="687.0" y="562.6" width="9.1" height="2.6" rx="1" fill="#40e0a0"/>
<rect x="707.0" y="532.6" width="9.7" height="2.6" rx="1" fill="#1aa8f8"/>
<rect x="706.1" y="537.3" width="9.9" height="2.6" rx="1" fill="#1aa8f8"/>
<rect x="708.2" y="542.2" width="7.3" height="2.6" rx="1" fill="#20c8f0"/>
<rect x="705.8" y="546.5" width="8.8" height="2.6" rx="1" fill="#40e0c0"/>
<rect x="707.5" y="550.8" width="10.8" height="2.6" rx="1" fill="#30d8e0"/>
<rect x="707.4" y="556.0" width="8.3" height="2.6" rx="1" fill="#20c8f0"/>
<rect x="705.6" y="560.8" width="11.2" height="2.6" rx="1" fill="#1aa8f8"/>
<rect x="724.5" y="532.9" width="10.9" height="2.6" rx="1" fill="#20c8f0"/>
<rect x="722.8" y="536.2" width="11.5" height="2.6" rx="1" fill="#40e0c0"/>
<rect x="726.3" y="540.3" width="8.3" height="2.6" rx="1" fill="#40e0a0"/>
<rect x="725.8" y="544.9" width="6.4" height="2.6" rx="1" fill="#20c8f0"/>
<rect x="727.4" y="548.9" width="7.5" height="2.6" rx="1" fill="#20c8f0"/>
<rect x="727.8" y="553.9" width="7.2" height="2.6" rx="1" fill="#20c8f0"/>
<rect x="724.8" y="558.6" width="7.5" height="2.6" rx="1" fill="#40e0c0"/>
<rect x="725.7" y="562.0" width="9.7" height="2.6" rx="1" fill="#40e0a0"/>
<rect x="743.4" y="525.7" width="9.3" height="3" rx="1" fill="#80f040"/>
<rect x="748.3" y="529.7" width="5.6" height="3" rx="1" fill="#80f040"/>
<rect x="743.8" y="532.9" width="9.3" height="3" rx="1" fill="#40e0a0"/>
<rect x="744.7" y="537.3" width="8.8" height="3" rx="1" fill="#80f040"/>
<rect x="744.2" y="540.8" width="9.4" height="3" rx="1" fill="#20c8f0"/>
<rect x="746.0" y="545.7" width="7.6" height="3" rx="1" fill="#80f040"/>
<rect x="750.1" y="523.4" width="11.3" height="3" rx="1" fill="#20c8f0"/>
<rect x="745.4" y="526.9" width="12.3" height="3" rx="1" fill="#80f040"/>
<rect x="749.7" y="531.6" width="12.7" height="3" rx="1" fill="#20c8f0"/>
<rect x="747.7" y="536.1" width="9.2" height="3" rx="1" fill="#40e0a0"/>
<rect x="748.8" y="540.6" width="9.1" height="3" rx="1" fill="#60f060"/>
<rect x="747.6" y="545.5" width="10.0" height="3" rx="1" fill="#40e0a0"/>
<rect x="753.8" y="525.4" width="7.5" height="3" rx="1" fill="#30d8c0"/>
<rect x="758.3" y="528.6" width="5.5" height="3" rx="1" fill="#60f060"/>
<rect x="755.6" y="532.7" width="5.3" height="3" rx="1" fill="#20c8f0"/>
<rect x="756.4" y="536.8" width="6.1" height="3" rx="1" fill="#60f060"/>
<rect x="757.1" y="541.4" width="7.4" height="3" rx="1" fill="#40e0a0"/>
<rect x="756.9" y="545.2" width="9.5" height="3" rx="1" fill="#80f040"/>
<rect x="760.0" y="524.3" width="13.6" height="3" rx="1" fill="#20c8f0"/>
<rect x="762.3" y="528.2" width="7.5" height="3" rx="1" fill="#60f060"/>
<rect x="760.1" y="533.1" width="12.8" height="3" rx="1" fill="#20c8f0"/>
<rect x="759.8" y="537.7" width="9.3" height="3" rx="1" fill="#30d8c0"/>
<rect x="762.0" y="542.0" width="10.0" height="3" rx="1" fill="#40e0a0"/>
<rect x="759.4" y="545.3" width="11.4" height="3" rx="1" fill="#60f060"/>
<rect x="768.2" y="523.3" width="6.7" height="3" rx="1" fill="#30d8c0"/>
<rect x="768.9" y="528.1" width="6.3" height="3" rx="1" fill="#60f060"/>
<rect x="766.3" y="531.9" width="10.2" height="3" rx="1" fill="#30d8c0"/>
<rect x="766.3" y="535.4" width="11.4" height="3" rx="1" fill="#40e0a0"/>
<rect x="765.6" y="539.3" width="7.9" height="3" rx="1" fill="#60f060"/>
<rect x="767.5" y="543.8" width="6.2" height="3" rx="1" fill="#60f060"/>
<rect x="769.2" y="520.3" width="10.4" height="3" rx="1" fill="#80f040"/>
<rect x="771.2" y="525.2" width="7.8" height="3" rx="1" fill="#60f060"/>
<rect x="772.6" y="528.9" width="8.0" height="3" rx="1" fill="#60f060"/>
<rect x="769.6" y="532.3" width="8.5" height="3" rx="1" fill="#80f040"/>
<rect x="768.1" y="537.0" width="11.5" height="3" rx="1" fill="#80f040"/>
<rect x="780.2" y="521.4" width="4.9" height="3" rx="1" fill="#80f040"/>
<rect x="781.0" y="525.0" width="6.4" height="3" rx="1" fill="#60f060"/>
<rect x="779.5" y="529.4" width="4.8" height="3" rx="1" fill="#80f040"/>
<rect x="778.4" y="532.9" width="9.3" height="3" rx="1" fill="#60f060"/>
<rect x="779.4" y="537.4" width="8.7" height="3" rx="1" fill="#60f060"/>
<rect x="779.8" y="518.5" width="9.9" height="3" rx="1" fill="#30d8c0"/>
<rect x="780.5" y="522.3" width="15.8" height="3" rx="1" fill="#20c8f0"/>
<rect x="779.2" y="526.0" width="9.3" height="3" rx="1" fill="#40e0a0"/>
<rect x="782.1" y="529.4" width="9.1" height="3" rx="1" fill="#40e0a0"/>
<rect x="782.3" y="533.6" width="9.1" height="3" rx="1" fill="#80f040"/>
<rect x="777.9" y="537.9" width="15.3" height="3" rx="1" fill="#60f060"/>
<rect x="788.9" y="519.8" width="10.7" height="3" rx="1" fill="#80f040"/>
<rect x="788.5" y="523.7" width="12.0" height="3" rx="1" fill="#80f040"/>
<rect x="787.7" y="528.4" width="7.1" height="3" rx="1" fill="#80f040"/>
<rect x="789.0" y="532.1" width="10.3" height="3" rx="1" fill="#80f040"/>
<rect x="791.4" y="536.6" width="7.3" height="3" rx="1" fill="#40e0a0"/>
<rect x="786.2" y="540.0" width="8.5" height="3" rx="1" fill="#40e0a0"/>
<rect x="790.3" y="516.2" width="10.2" height="3" rx="1" fill="#80f040"/>
<rect x="794.3" y="520.4" width="9.7" height="3" rx="1" fill="#40e0a0"/>
<rect x="789.9" y="523.7" width="14.4" height="3" rx="1" fill="#80f040"/>
<rect x="793.6" y="527.2" width="11.6" height="3" rx="1" fill="#60f060"/>
<rect x="786.8" y="530.8" width="16.0" height="3" rx="1" fill="#80f040"/>
<rect x="791.8" y="534.5" width="10.8" height="3" rx="1" fill="#60f060"/>
<rect x="790.2" y="537.8" width="16.2" height="3" rx="1" fill="#30d8c0"/>
<rect x="801.6" y="518.0" width="8.6" height="3" rx="1" fill="#30d8c0"/>
<rect x="801.4" y="522.7" width="5.8" height="3" rx="1" fill="#30d8c0"/>
<rect x="799.8" y="527.5" width="10.3" height="3" rx="1" fill="#40e0a0"/>
<rect x="801.9" y="531.7" width="5.4" height="3" rx="1" fill="#80f040"/>
<rect x="802.4" y="517.2" width="17.8" height="3" rx="1" fill="#30d8c0"/>
<rect x="804.6" y="520.4" width="13.4" height="3" rx="1" fill="#60f060"/>
<rect x="803.0" y="524.2" width="13.7" height="3" rx="1" fill="#60f060"/>
<rect x="803.4" y="528.3" width="15.6" height="3" rx="1" fill="#80f040"/>
<rect x="797.3" y="531.5" width="18.2" height="3" rx="1" fill="#30d8c0"/>
<rect x="802.6" y="535.8" width="14.8" height="3" rx="1" fill="#30d8c0"/>
<rect x="809.6" y="514.0" width="4.9" height="3" rx="1" fill="#60f060"/>
<rect x="810.6" y="517.9" width="6.6" height="3" rx="1" fill="#60f060"/>
<rect x="812.1" y="522.2" width="6.6" height="3" rx="1" fill="#80f040"/>
<rect x="811.4" y="526.3" width="5.9" height="3" rx="1" fill="#30d8c0"/>
<rect x="810.6" y="530.3" width="7.9" height="3" rx="1" fill="#60f060"/>
<rect x="812.9" y="533.9" width="7.5" height="3" rx="1" fill="#20c8f0"/>
<rect x="814.2" y="513.3" width="9.7" height="3" rx="1" fill="#20c8f0"/>
<rect x="814.4" y="517.4" width="6.6" height="3" rx="1" fill="#60f060"/>
<rect x="816.9" y="521.5" width="9.6" height="3" rx="1" fill="#60f060"/>
<rect x="812.2" y="525.1" width="10.5" height="3" rx="1" fill="#20c8f0"/>
<rect x="818.1" y="528.5" width="5.4" height="3" rx="1" fill="#20c8f0"/>
<rect x="820.9" y="514.9" width="9.6" height="3" rx="1" fill="#80f040"/>
<rect x="817.2" y="518.7" width="11.0" height="3" rx="1" fill="#60f060"/>
<rect x="819.5" y="521.8" width="8.8" height="3" rx="1" fill="#60f060"/>
<rect x="817.5" y="526.5" width="11.2" height="3" rx="1" fill="#80f040"/>
<rect x="818.3" y="530.7" width="12.6" height="3" rx="1" fill="#20c8f0"/>
<rect x="824.6" y="511.9" width="11.2" height="3" rx="1" fill="#20c8f0"/>
<rect x="827.9" y="515.0" width="9.6" height="3" rx="1" fill="#60f060"/>
<rect x="827.8" y="519.7" width="6.3" height="3" rx="1" fill="#60f060"/>
<rect x="824.4" y="523.1" width="9.0" height="3" rx="1" fill="#20c8f0"/>
<rect x="822.7" y="527.5" width="9.6" height="3" rx="1" fill="#40e0a0"/>
<rect x="830.2" y="512.0" width="9.1" height="3" rx="1" fill="#60f060"/>
<rect x="831.3" y="515.6" width="13.9" height="3" rx="1" fill="#60f060"/>
<rect x="830.1" y="519.0" width="12.4" height="3" rx="1" fill="#30d8c0"/>
<rect x="827.7" y="522.4" width="14.1" height="3" rx="1" fill="#40e0a0"/>
<rect x="830.8" y="526.7" width="9.4" height="3" rx="1" fill="#60f060"/>
<rect x="830.8" y="513.2" width="18.0" height="3" rx="1" fill="#30d8c0"/>
<rect x="830.9" y="517.7" width="14.8" height="3" rx="1" fill="#80f040"/>
<rect x="837.1" y="522.5" width="10.5" height="3" rx="1" fill="#20c8f0"/>
<rect x="835.2" y="526.6" width="11.5" height="3" rx="1" fill="#40e0a0"/>
<rect x="834.7" y="530.3" width="11.0" height="3" rx="1" fill="#80f040"/>
<rect x="840.5" y="510.3" width="8.4" height="3" rx="1" fill="#40e0a0"/>
<rect x="839.8" y="514.8" width="13.8" height="3" rx="1" fill="#60f060"/>
<rect x="842.9" y="518.7" width="10.1" height="3" rx="1" fill="#30d8c0"/>
<rect x="840.0" y="522.2" width="15.3" height="3" rx="1" fill="#30d8c0"/>
<rect x="843.6" y="526.0" width="10.6" height="3" rx="1" fill="#60f060"/>
<rect x="845.7" y="509.0" width="11.2" height="3" rx="1" fill="#80f040"/>
<rect x="847.0" y="512.2" width="11.1" height="3" rx="1" fill="#30d8c0"/>
<rect x="846.9" y="517.0" width="12.8" height="3" rx="1" fill="#30d8c0"/>
<rect x="844.8" y="520.7" width="10.7" height="3" rx="1" fill="#60f060"/>
<rect x="853.2" y="507.4" width="6.4" height="3" rx="1" fill="#20c8f0"/>
<rect x="853.4" y="512.3" width="7.1" height="3" rx="1" fill="#20c8f0"/>
<rect x="856.2" y="516.7" width="5.3" height="3" rx="1" fill="#30d8c0"/>
<rect x="855.6" y="521.6" width="8.0" height="3" rx="1" fill="#60f060"/>
<rect x="860.6" y="506.7" width="6.4" height="3" rx="1" fill="#40e0a0"/>
<rect x="859.8" y="510.4" width="7.6" height="3" rx="1" fill="#60f060"/>
<rect x="855.8" y="514.5" width="10.5" height="3" rx="1" fill="#40e0a0"/>
<rect x="859.5" y="519.2" width="10.4" height="3" rx="1" fill="#60f060"/>
<rect x="859.8" y="523.9" width="9.2" height="3" rx="1" fill="#60f060"/>
<rect x="864.7" y="508.2" width="9.1" height="3" rx="1" fill="#80f040"/>
<rect x="862.1" y="511.3" width="7.0" height="3" rx="1" fill="#30d8c0"/>
<rect x="863.1" y="515.4" width="7.3" height="3" rx="1" fill="#80f040"/>
<rect x="861.3" y="519.3" width="8.0" height="3" rx="1" fill="#60f060"/>
<rect x="861.4" y="522.8" width="7.4" height="3" rx="1" fill="#80f040"/>
<rect x="864.2" y="504.9" width="18.9" height="3" rx="1" fill="#60f060"/>
<rect x="863.3" y="508.4" width="18.4" height="3" rx="1" fill="#20c8f0"/>
<rect x="865.6" y="511.9" width="10.2" height="3" rx="1" fill="#30d8c0"/>
<rect x="866.1" y="516.2" width="17.7" height="3" rx="1" fill="#80f040"/>
<rect x="868.3" y="520.0" width="14.7" height="3" rx="1" fill="#40e0a0"/>
<rect x="872.2" y="505.8" width="9.4" height="3" rx="1" fill="#60f060"/>
<rect x="874.6" y="510.4" width="9.7" height="3" rx="1" fill="#30d8c0"/>
<rect x="875.5" y="515.2" width="6.6" height="3" rx="1" fill="#30d8c0"/>
<rect x="877.0" y="506.2" width="9.7" height="3" rx="1" fill="#80f040"/>
<rect x="880.9" y="510.3" width="7.8" height="3" rx="1" fill="#60f060"/>
<rect x="881.0" y="513.8" width="10.3" height="3" rx="1" fill="#80f040"/>
<rect x="881.9" y="516.9" width="6.0" height="3" rx="1" fill="#80f040"/>
<rect x="877.6" y="520.7" width="10.3" height="3" rx="1" fill="#30d8c0"/>
<rect x="882.8" y="505.1" width="17.7" height="3" rx="1" fill="#40e0a0"/>
<rect x="883.6" y="509.8" width="12.0" height="3" rx="1" fill="#80f040"/>
<rect x="879.0" y="513.8" width="17.4" height="3" rx="1" fill="#20c8f0"/>
<rect x="890.4" y="501.4" width="12.3" height="3" rx="1" fill="#60f060"/>
<rect x="891.3" y="505.3" width="11.2" height="3" rx="1" fill="#60f060"/>
<rect x="888.5" y="510.0" width="11.9" height="3" rx="1" fill="#80f040"/>
<rect x="891.8" y="513.4" width="12.0" height="3" rx="1" fill="#20c8f0"/>
<rect x="891.7" y="516.6" width="11.6" height="3" rx="1" fill="#20c8f0"/>
<rect x="895.7" y="501.0" width="6.0" height="3" rx="1" fill="#30d8c0"/>
<rect x="895.7" y="505.6" width="7.0" height="3" rx="1" fill="#30d8c0"/>
<rect x="894.3" y="510.0" width="7.9" height="3" rx="1" fill="#80f040"/>
<rect x="899.2" y="500.5" width="9.1" height="3" rx="1" fill="#20c8f0"/>
<rect x="900.8" y="505.1" width="9.5" height="3" rx="1" fill="#20c8f0"/>
<rect x="901.5" y="508.2" width="6.5" height="3" rx="1" fill="#60f060"/>
<rect x="903.4" y="501.3" width="15.0" height="3" rx="1" fill="#80f040"/>
<rect x="906.3" y="504.5" width="10.3" height="3" rx="1" fill="#60f060"/>
<rect x="906.0" y="507.9" width="7.9" height="3" rx="1" fill="#80f040"/>
<rect x="909.8" y="500.5" width="7.2" height="3" rx="1" fill="#80f040"/>
<rect x="914.5" y="504.4" width="7.8" height="3" rx="1" fill="#80f040"/>
<rect x="912.3" y="508.8" width="4.6" height="3" rx="1" fill="#80f040"/>
<rect x="915.2" y="498.2" width="9.6" height="3" rx="1" fill="#30d8c0"/>
<rect x="919.7" y="501.3" width="8.9" height="3" rx="1" fill="#30d8c0"/>
<rect x="917.4" y="505.1" width="8.6" height="3" rx="1" fill="#30d8c0"/>
<rect x="918.3" y="496.4" width="18.5" height="3" rx="1" fill="#80f040"/>
<rect x="920.1" y="500.9" width="10.5" height="3" rx="1" fill="#60f060"/>
<rect x="922.6" y="505.1" width="15.1" height="3" rx="1" fill="#60f060"/>
<rect x="928.6" y="496.0" width="9.1" height="3" rx="1" fill="#60f060"/>
<rect x="925.2" y="500.1" width="12.4" height="3" rx="1" fill="#80f040"/>
<rect x="924.7" y="503.2" width="10.4" height="3" rx="1" fill="#80f040"/>
<rect x="925.4" y="508.0" width="14.0" height="3" rx="1" fill="#40e0a0"/>
<rect x="935.2" y="496.8" width="10.6" height="3" rx="1" fill="#20c8f0"/>
<rect x="933.6" y="501.5" width="8.5" height="3" rx="1" fill="#60f060"/>
<rect x="936.8" y="505.3" width="7.1" height="3" rx="1" fill="#40e0a0"/>
</g>
<ellipse cx="752" cy="542" rx="4" ry="3" fill="#e0a020" filter="url(#bl4)"/>
<ellipse cx="558" cy="547" rx="2" ry="4" fill="#e0a020" filter="url(#bl4)"/>
<rect x="1108" y="467" width="5" height="14" fill="#f0e040"/>
<circle cx="1104" cy="487" r="3" fill="none" stroke="#e04030" stroke-width="1"/>
</svg>
<div class="a" style="left:280px;top:744px;width:63px;height:22px;background:#fafafa;border:1px solid #dcdcdc;border-bottom:none"></div>
<div class="t" style="left:288px;top:749px;font-size:12px;color:#111">历史数据</div>
<div class="a" style="left:280px;top:765px;width:1171px;height:1px;background:#e0e0e0"></div>
<div class="a" style="left:283px;top:766px;width:1166px;height:29px;background:linear-gradient(#fbfbfb,#f2f2f2 80%,#ebebeb)"></div>
<div class="a" style="left:291px;top:772px;width:2px;height:20px;background:repeating-linear-gradient(#b8b8b8 0 2px,transparent 2px 4px)"></div>
<div class="t" style="left:300px;top:775px;font-size:12px;color:#222">新建文件</div>
<div class="t" style="left:361px;top:775px;font-size:12px;color:#222">载入文件</div>
<div class="t" style="left:421px;top:775px;font-size:12px;color:#222">另存文件</div>
<div class="t" style="left:480px;top:775px;font-size:12px;color:#222">文件:</div>
<div class="t" style="left:514px;top:775px;font-size:13px;color:#222">C:\HopooColor\CXS V3.1.21\Records.WIR</div>
<div class="t" style="left:767px;top:775px;font-size:12px;color:#222">导出Excel格式文件</div>
<div class="t" style="left:877px;top:775px;font-size:12px;color:#222">L 亮度 单位: cd/m2</div>
<div class="t" style="left:994px;top:775px;font-size:12px;color:#222">添加</div>
<div class="t" style="left:1030px;top:775px;font-size:12px;color:#222">删除</div>
<div class="t" style="left:1066px;top:775px;font-size:12px;color:#222">清空</div>
<div class="a" style="left:287px;top:795px;width:1161px;height:208px;background:#afafaf;border:1px solid #111"></div>
<div class="a" style="left:288px;top:796px;width:840px;height:20px;background:#fafafa"></div>
<div class="a" style="left:288px;top:816px;width:840px;height:186px;background:#fefefe"></div>
<div class="a" style="left:288px;top:816px;width:40px;height:186px;background:#fafafa"></div>
<div class="a" style="left:329px;top:816px;width:120px;height:23px;background:#0a78d7"></div>
<div class="a" style="left:569px;top:816px;width:39px;height:23px;background:#1010d8"></div>
<div class="a" style="left:569px;top:839px;width:39px;height:23px;background:#1010d8"></div>
<div class="a" style="left:569px;top:862px;width:39px;height:23px;background:#1010d8"></div>
<div class="a" style="left:569px;top:885px;width:39px;height:23px;background:#1010d8"></div>
<div class="a" style="left:569px;top:908px;width:39px;height:23px;background:#1010d8"></div>
<div class="a" style="left:569px;top:931px;width:39px;height:23px;background:#1010d8"></div>
<div class="a" style="left:569px;top:954px;width:39px;height:23px;background:#1010d8"></div>
<div class="a" style="left:569px;top:977px;width:39px;height:23px;background:#1010d8"></div>
<div class="a" style="left:288px;top:816px;width:840px;height:1px;background:#c8c8c8"></div>
<div class="a" style="left:288px;top:839px;width:840px;height:1px;background:#c8c8c8"></div>
<div class="a" style="left:288px;top:862px;width:840px;height:1px;background:#c8c8c8"></div>
<div class="a" style="left:288px;top:885px;width:840px;height:1px;background:#c8c8c8"></div>
<div class="a" style="left:288px;top:908px;width:840px;height:1px;background:#c8c8c8"></div>
<div class="a" style="left:288px;top:931px;width:840px;height:1px;background:#c8c8c8"></div>
<div class="a" style="left:288px;top:954px;width:840px;height:1px;background:#c8c8c8"></div>
<div class="a" style="left:288px;top:977px;width:840px;height:1px;background:#c8c8c8"></div>
<div class="a" style="left:288px;top:816px;width:840px;height:1px;background:#bbbbbb"></div>
<div class="a" style="left:329px;top:796px;width:1px;height:206px;background:#c0c0c0"></div>
<div class="a" style="left:449px;top:796px;width:1px;height:206px;background:#c0c0c0"></div>
<div class="a" style="left:569px;top:796px;width:1px;height:206px;background:#c0c0c0"></div>
<div class="a" style="left:608px;top:796px;width:1px;height:206px;background:#c0c0c0"></div>
<div class="a" style="left:668px;top:796px;width:1px;height:206px;background:#c0c0c0"></div>
<div class="a" style="left:728px;top:796px;width:1px;height:206px;background:#c0c0c0"></div>
<div class="a" style="left:788px;top:796px;width:1px;height:206px;background:#c0c0c0"></div>
<div class="a" style="left:868px;top:796px;width:1px;height:206px;background:#c0c0c0"></div>
<div class="a" style="left:948px;top:796px;width:1px;height:206px;background:#c0c0c0"></div>
<div class="a" style="left:1008px;top:796px;width:1px;height:206px;background:#c0c0c0"></div>
<div class="a" style="left:1068px;top:796px;width:1px;height:206px;background:#c0c0c0"></div>
<div class="a" style="left:1128px;top:796px;width:1px;height:206px;background:#c0c0c0"></div>
<div class="t" style="left:335px;top:800px;font-size:12px;color:#111">编号</div>
<div class="t" style="left:455px;top:800px;font-size:12px;color:#111">时间</div>
<div class="t" style="left:575px;top:800px;font-size:12px;color:#111">判断</div>
<div class="ll" style="left:613px;top:801px;font-size:11px;color:#111">Lavg</div>
<div class="ll" style="left:673px;top:801px;font-size:11px;color:#111">Lmax</div>
<div class="ll" style="left:733px;top:801px;font-size:11px;color:#111">Lmin</div>
<div class="ll" style="left:793px;top:801px;font-size:11px;color:#111">Lmax(名称)</div>
<div class="ll" style="left:873px;top:801px;font-size:11px;color:#111">Lmin(名称)</div>
<div class="ll" style="left:953px;top:801px;font-size:11px;color:#111">Lmin/Lmax</div>
<div class="ll" style="left:1013px;top:801px;font-size:11px;color:#111">Lavg/Lmax</div>
<div class="ll" style="left:1073px;top:801px;font-size:11px;color:#111">Lmin/Lavg</div>
<svg class="a" style="left:294px;top:823px" width="6" height="10"><path d="M0 0 L5 4.5 L0 9 Z" fill="#333"/></svg>
<div class="ll" style="left:450px;top:822px;font-size:11px">2024-06-21 18:06:25</div>
<div class="ll" style="left:570px;top:822px;font-size:11px;color:#fff">PASS</div>
<div class="ll" style="left:610px;top:822px;font-size:11px">0</div>
<div class="ll" style="left:670px;top:822px;font-size:11px">0</div>
<div class="ll" style="left:730px;top:822px;font-size:11px">0</div>
<div class="ll" style="left:950px;top:822px;font-size:11px">0.00</div>
<div class="ll" style="left:1010px;top:822px;font-size:11px">0.00</div>
<div class="ll" style="left:1070px;top:822px;font-size:11px">0.00</div>
<div class="ll" style="left:450px;top:845px;font-size:11px">2024-06-21 18:06:49</div>
<div class="ll" style="left:570px;top:845px;font-size:11px;color:#fff">PASS</div>
<div class="ll" style="left:610px;top:845px;font-size:11px">0</div>
<div class="ll" style="left:670px;top:845px;font-size:11px">0</div>
<div class="ll" style="left:730px;top:845px;font-size:11px">0</div>
<div class="ll" style="left:950px;top:845px;font-size:11px">0.00</div>
<div class="ll" style="left:1010px;top:845px;font-size:11px">0.00</div>
<div class="ll" style="left:1070px;top:845px;font-size:11px">0.00</div>
<div class="ll" style="left:450px;top:868px;font-size:11px">2024-06-21 18:10:21</div>
<div class="ll" style="left:570px;top:868px;font-size:11px;color:#fff">PASS</div>
<div class="ll" style="left:610px;top:868px;font-size:11px">0</div>
<div class="ll" style="left:670px;top:868px;font-size:11px">0</div>
<div class="ll" style="left:730px;top:868px;font-size:11px">0</div>
<div class="ll" style="left:950px;top:868px;font-size:11px">0.00</div>
<div class="ll" style="left:1010px;top:868px;font-size:11px">0.00</div>
<div class="ll" style="left:1070px;top:868px;font-size:11px">0.00</div>
<div class="ll" style="left:450px;top:891px;font-size:11px">2024-06-21 18:12:33</div>
<div class="ll" style="left:570px;top:891px;font-size:11px;color:#fff">PASS</div>
<div class="ll" style="left:610px;top:891px;font-size:11px">0</div>
<div class="ll" style="left:670px;top:891px;font-size:11px">0</div>
<div class="ll" style="left:730px;top:891px;font-size:11px">0</div>
<div class="ll" style="left:950px;top:891px;font-size:11px">0.00</div>
<div class="ll" style="left:1010px;top:891px;font-size:11px">0.00</div>
<div class="ll" style="left:1070px;top:891px;font-size:11px">0.00</div>
<div class="ll" style="left:450px;top:914px;font-size:11px">2024-06-21 18:14:29</div>
<div class="ll" style="left:570px;top:914px;font-size:11px;color:#fff">PASS</div>
<div class="ll" style="left:610px;top:914px;font-size:11px">0</div>
<div class="ll" style="left:670px;top:914px;font-size:11px">0</div>
<div class="ll" style="left:730px;top:914px;font-size:11px">0</div>
<div class="ll" style="left:950px;top:914px;font-size:11px">0.00</div>
<div class="ll" style="left:1010px;top:914px;font-size:11px">0.00</div>
<div class="ll" style="left:1070px;top:914px;font-size:11px">0.00</div>
<div class="ll" style="left:450px;top:937px;font-size:11px">2024-06-21 18:15:01</div>
<div class="ll" style="left:570px;top:937px;font-size:11px;color:#fff">PASS</div>
<div class="ll" style="left:610px;top:937px;font-size:11px">0</div>
<div class="ll" style="left:670px;top:937px;font-size:11px">0</div>
<div class="ll" style="left:730px;top:937px;font-size:11px">0</div>
<div class="ll" style="left:950px;top:937px;font-size:11px">0.00</div>
<div class="ll" style="left:1010px;top:937px;font-size:11px">0.00</div>
<div class="ll" style="left:1070px;top:937px;font-size:11px">0.00</div>
<div class="ll" style="left:450px;top:960px;font-size:11px">2024-06-21 20:05:41</div>
<div class="ll" style="left:570px;top:960px;font-size:11px;color:#fff">PASS</div>
<div class="ll" style="left:610px;top:960px;font-size:11px">0</div>
<div class="ll" style="left:670px;top:960px;font-size:11px">0</div>
<div class="ll" style="left:730px;top:960px;font-size:11px">0</div>
<div class="ll" style="left:950px;top:960px;font-size:11px">0.00</div>
<div class="ll" style="left:1010px;top:960px;font-size:11px">0.00</div>
<div class="ll" style="left:1070px;top:960px;font-size:11px">0.00</div>
<div class="ll" style="left:450px;top:983px;font-size:11px">2024-06-21 20:07:20</div>
<div class="ll" style="left:570px;top:983px;font-size:11px;color:#fff">PASS</div>
<div class="ll" style="left:610px;top:983px;font-size:11px">0</div>
<div class="ll" style="left:670px;top:983px;font-size:11px">0</div>
<div class="ll" style="left:730px;top:983px;font-size:11px">0</div>
<div class="ll" style="left:950px;top:983px;font-size:11px">0.00</div>
<div class="ll" style="left:1010px;top:983px;font-size:11px">0.00</div>
<div class="ll" style="left:1070px;top:983px;font-size:11px">0.00</div>
<div class="a" style="left:1429px;top:796px;width:17px;height:206px;background:#f0f0f0"></div>
<div class="a" style="left:1430px;top:814px;width:15px;height:125px;background:#cdcdcd"></div>
<svg class="a" style="left:1432px;top:800px" width="11" height="7"><path d="M1 6 L5.5 1.5 L10 6" stroke="#555" stroke-width="1.4" fill="none"/></svg>
<svg class="a" style="left:1432px;top:989px" width="11" height="7"><path d="M1 1 L5.5 5.5 L10 1" stroke="#555" stroke-width="1.4" fill="none"/></svg>
<div class="a" style="left:1458px;top:220px;width:1px;height:790px;background:#d8d8d8"></div>
<div class="a" style="left:1459px;top:220px;width:452px;height:789px;background:#fdfdfd"></div>
<div class="a" style="left:1459px;top:221px;width:86px;height:20px;background:#fdfdfd;border:1px solid #e0e0e0;border-bottom:none"></div>
<div class="t" style="left:1465px;top:225px;font-size:12px;color:#111">发光区域数据</div>
<div class="a" style="left:1545px;top:223px;width:56px;height:18px;background:#ebebeb;border:1px solid #dcdcdc;border-bottom:none"></div>
<div class="t" style="left:1550px;top:227px;font-size:12px;color:#111">历史数据</div>
<div class="a" style="left:1459px;top:240px;width:451px;height:1px;background:#dcdcdc"></div>
<div class="a" style="left:1909px;top:240px;width:1px;height:769px;background:#dcdcdc"></div>
<div class="a" style="left:1462px;top:242px;width:443px;height:27px;background:linear-gradient(#fafafa,#f0f0f0 80%,#e8e8e8)"></div>
<div class="a" style="left:1468px;top:248px;width:2px;height:18px;background:repeating-linear-gradient(#b8b8b8 0 2px,transparent 2px 4px)"></div>
<div class="t" style="left:1477px;top:250px;font-size:12px;color:#223">L 亮度 单位: cd/m2</div>
<div class="a" style="left:1465px;top:270px;width:441px;height:501px;background:#afafaf;border:1px solid #111"></div>
<div class="a" style="left:1466px;top:271px;width:439px;height:20px;background:#fafafa"></div>
<div class="a" style="left:1466px;top:291px;width:439px;height:68px;background:#fefefe"></div>
<div class="a" style="left:1466px;top:291px;width:19px;height:68px;background:#fafafa"></div>
<div class="a" style="left:1485px;top:291px;width:40px;height:22px;background:#0f7cd2"></div>
<div class="a" style="left:1605px;top:291px;width:60px;height:23px;background:#1010d8"></div>
<div class="a" style="left:1605px;top:313px;width:60px;height:23px;background:#1010d8"></div>
<div class="a" style="left:1605px;top:336px;width:60px;height:23px;background:#1010d8"></div>
<div class="a" style="left:1466px;top:291px;width:439px;height:1px;background:#c8c8c8"></div>
<div class="a" style="left:1466px;top:313px;width:439px;height:1px;background:#c8c8c8"></div>
<div class="a" style="left:1466px;top:336px;width:439px;height:1px;background:#c8c8c8"></div>
<div class="a" style="left:1485px;top:271px;width:1px;height:88px;background:#c0c0c0"></div>
<div class="a" style="left:1525px;top:271px;width:1px;height:88px;background:#c0c0c0"></div>
<div class="a" style="left:1605px;top:271px;width:1px;height:88px;background:#c0c0c0"></div>
<div class="a" style="left:1665px;top:271px;width:1px;height:88px;background:#c0c0c0"></div>
<div class="a" style="left:1745px;top:271px;width:1px;height:88px;background:#c0c0c0"></div>
<div class="a" style="left:1825px;top:271px;width:1px;height:88px;background:#c0c0c0"></div>
<div class="ll b" style="left:1492px;top:276px;font-size:11px">count</div>
<div class="t" style="left:1532px;top:275px;font-size:12px;color:#111">区域名称</div>
<div class="t" style="left:1611px;top:275px;font-size:12px;color:#111">判定</div>
<div class="ll b" style="left:1671px;top:276px;font-size:11px">Lavg</div>
<div class="ll b" style="left:1751px;top:276px;font-size:11px">Lmax</div>
<div class="ll b" style="left:1831px;top:276px;font-size:11px">Lmin</div>
<div class="ll" style="left:1487px;top:297px;font-size:11px;color:#a0f0ff">#1</div>
<div class="t" style="left:1527px;top:296px;font-size:12px;color:#111">桥体部分</div>
<div class="ll" style="left:1607px;top:297px;font-size:11px;color:#fff">PASS</div>
<div class="ll" style="left:1667px;top:297px;font-size:11px">66.36</div>
<div class="ll" style="left:1748px;top:297px;font-size:11px">705.2</div>
<div class="ll" style="left:1827px;top:297px;font-size:11px">1.197</div>
<div class="ll" style="left:1487px;top:319px;font-size:11px;color:#111">#2</div>
<div class="t" style="left:1527px;top:318px;font-size:12px;color:#111">背景环境</div>
<div class="ll" style="left:1607px;top:319px;font-size:11px;color:#fff">PASS</div>
<div class="ll" style="left:1667px;top:319px;font-size:11px">2.474</div>
<div class="ll" style="left:1748px;top:319px;font-size:11px">109.3</div>
<div class="ll" style="left:1827px;top:319px;font-size:11px">1.061</div>
<div class="ll" style="left:1487px;top:342px;font-size:11px;color:#111">#3</div>
<div class="t" style="left:1527px;top:341px;font-size:12px;color:#111">整体</div>
<div class="ll" style="left:1607px;top:342px;font-size:11px;color:#fff">PASS</div>
<div class="ll" style="left:1667px;top:342px;font-size:11px">19.17</div>
<div class="ll" style="left:1748px;top:342px;font-size:11px">705.2</div>
<div class="ll" style="left:1827px;top:342px;font-size:11px">1.061</div>
<div class="a" style="left:1466px;top:753px;width:439px;height:17px;background:#f0f0f0"></div>
<div class="a" style="left:1483px;top:754px;width:176px;height:15px;background:#cdcdcd"></div>
<svg class="a" style="left:1470px;top:756px" width="7" height="11"><path d="M6 1 L1.5 5.5 L6 10" stroke="#555" stroke-width="1.4" fill="none"/></svg>
<svg class="a" style="left:1893px;top:756px" width="7" height="11"><path d="M1 1 L5.5 5.5 L1 10" stroke="#555" stroke-width="1.4" fill="none"/></svg>
<div class="a" style="left:1468px;top:777px;width:435px;height:213px;background:#afafaf;border:1px solid #111"></div>
<div class="a" style="left:1469px;top:778px;width:220px;height:20px;background:#fafafa"></div>
<div class="a" style="left:1469px;top:798px;width:220px;height:138px;background:#fefefe"></div>
<div class="a" style="left:1469px;top:798px;width:40px;height:138px;background:#fafafa"></div>
<div class="a" style="left:1509px;top:798px;width:120px;height:23px;background:#0f7cd2"></div>
<div class="a" style="left:1469px;top:798px;width:220px;height:1px;background:#c8c8c8"></div>
<div class="a" style="left:1469px;top:821px;width:220px;height:1px;background:#c8c8c8"></div>
<div class="a" style="left:1469px;top:844px;width:220px;height:1px;background:#c8c8c8"></div>
<div class="a" style="left:1469px;top:867px;width:220px;height:1px;background:#c8c8c8"></div>
<div class="a" style="left:1469px;top:890px;width:220px;height:1px;background:#c8c8c8"></div>
<div class="a" style="left:1469px;top:913px;width:220px;height:1px;background:#c8c8c8"></div>
<div class="a" style="left:1509px;top:778px;width:1px;height:158px;background:#c0c0c0"></div>
<div class="a" style="left:1629px;top:778px;width:1px;height:158px;background:#c0c0c0"></div>
<div class="a" style="left:1689px;top:778px;width:1px;height:158px;background:#c0c0c0"></div>
<div class="t" style="left:1515px;top:782px;font-size:12px;color:#111">参数</div>
<div class="t" style="left:1635px;top:782px;font-size:12px;color:#111">值</div>
<svg class="a" style="left:1476px;top:804px" width="6" height="10"><path d="M0 0 L5 4.5 L0 9 Z" fill="#333"/></svg>
<div class="t" style="left:1511px;top:804px;font-size:11px;color:#a0f0ff"><span class="mono" style="letter-spacing:-0.6px">Lavg</span></div>
<div class="ll" style="left:1631px;top:804px;font-size:11px">29.33</div>
<div class="t" style="left:1511px;top:827px;font-size:11px;color:#111"><span class="mono" style="letter-spacing:-0.6px">Lmax :</span> 桥体部分</div>
<div class="ll" style="left:1631px;top:827px;font-size:11px">66.36</div>
<div class="t" style="left:1511px;top:850px;font-size:11px;color:#111"><span class="mono" style="letter-spacing:-0.6px">Lmin :</span> 背景环境</div>
<div class="ll" style="left:1631px;top:850px;font-size:11px">2.474</div>
<div class="t" style="left:1511px;top:873px;font-size:11px;color:#111"><span class="mono" style="letter-spacing:-0.6px">Lmin/Lmax</span></div>
<div class="ll" style="left:1631px;top:873px;font-size:11px">0.04</div>
<div class="t" style="left:1511px;top:896px;font-size:11px;color:#111"><span class="mono" style="letter-spacing:-0.6px">Lmin/Lavg</span></div>
<div class="ll" style="left:1631px;top:896px;font-size:11px">0.08</div>
<div class="t" style="left:1511px;top:919px;font-size:11px;color:#111"><span class="mono" style="letter-spacing:-0.6px">Lavg/Lmax</span></div>
<div class="ll" style="left:1631px;top:919px;font-size:11px">0.44</div>
<!-- status bar -->
<div class="a" style="left:0;top:1017px;width:1920px;height:23px;background:#f0f0f0;border-top:1px solid #c8c8c8"></div>
<div class="t" style="left:4px;top:1023px;font-size:12.6px;color:#222">ver: 3.1.21 &nbsp;update: 2024.6 &nbsp;ver: 1.7.22(x64),1.0.9 (24.6) &nbsp;CX-200 , CX1134339(00L07646767) &nbsp;T=???? &nbsp;<span style="color:#2a2a90">4 4 400 ms...[cpos=-1]4,20,80,400,</span></div>
<div class="a" style="left:0;top:1040px;width:1920px;height:8px;background:#dde4ea"></div>
<div class="a" style="left:0;top:1040px;width:48px;height:8px;background:#dfe8e4"></div>
<div class="a" style="left:48px;top:1040px;width:287px;height:8px;background:#f7f8f8"></div>
<div class="a" style="left:335px;top:1040px;width:150px;height:8px;background:#e4ece8"></div>
<div class="a" style="left:1800px;top:1040px;width:60px;height:8px;overflow:hidden"><div class="t" style="left:11px;top:5px;font-size:13px;color:#111">20:01</div></div>
<div class="a" style="left:1915px;top:1040px;width:1px;height:8px;background:#999"></div>
</body></html>
